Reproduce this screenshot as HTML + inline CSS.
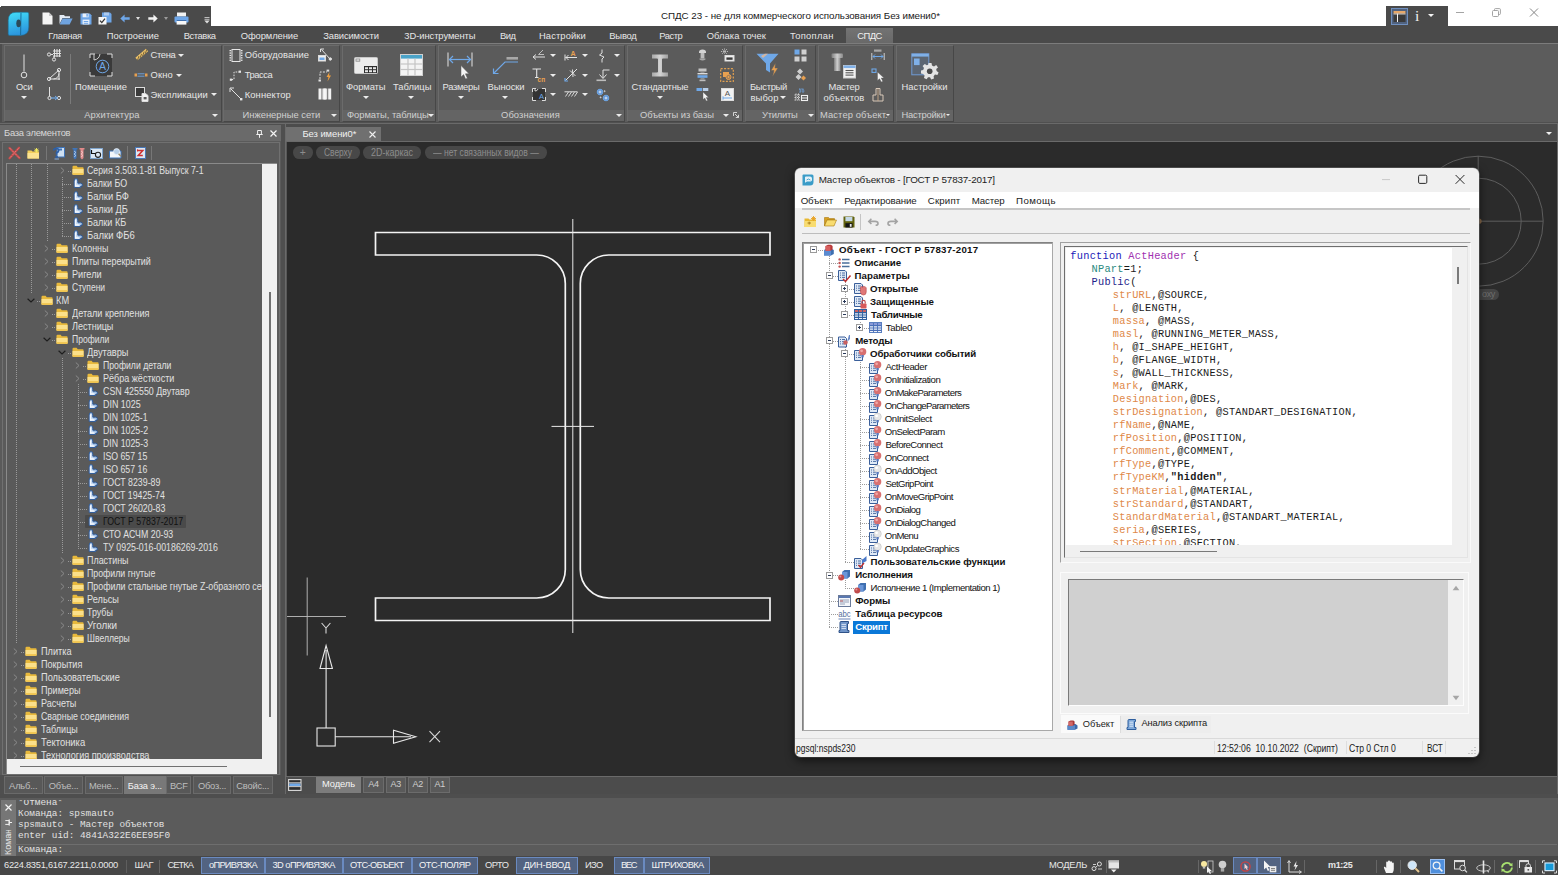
<!DOCTYPE html>
<html><head><meta charset="utf-8">
<style>
*{box-sizing:border-box;margin:0;padding:0}
html,body{width:1560px;height:877px;overflow:hidden;background:#fff}
body{font-family:"Liberation Sans",sans-serif;font-size:11px;color:#dcdcdc;position:relative}
.a{position:absolute}
.t{position:absolute;white-space:pre;line-height:1}
svg{position:absolute;overflow:visible}

</style></head><body>
<!-- top -->
<div class="a" style="left:1px;top:6px;width:210px;height:21px;background:#4a4a4a;"></div>
<div class="a" style="left:0px;top:26px;width:1558px;height:18px;background:#4a4a4a;"></div>
<div class="a" style="left:0px;top:7px;width:1px;height:20px;background:#4a4a4a;"></div>
<svg style="left:7.5px;top:12px" width="22" height="24" viewBox="0 0 22 24"><defs><linearGradient id="lg1" x1="0" y1="0" x2="0.25" y2="1"><stop offset="0" stop-color="#42def8"/><stop offset="1" stop-color="#2c96de"/></linearGradient></defs>
<path d="M8 0.3 H19.3 Q20.8 0.3 20.8 1.8 V15 Q20.8 23.4 12.5 23.4 H1.7 Q0.2 23.4 0.2 21.9 V8.5 Q0.2 0.3 8 0.3Z" fill="url(#lg1)" stroke="#1d6f96" stroke-width="0.6"/>
<path d="M13 0.8 L12.6 23" stroke="#1a6e9e" stroke-width="1"/>
<ellipse cx="10.6" cy="11.3" rx="2.3" ry="3.9" fill="#2c4a58"/></svg>
<svg style="left:42px;top:12px" width="11" height="13" viewBox="0 0 11 13"><path d="M0.5 0.5 H7 L10.5 4 V12.5 H0.5Z" fill="#f4f4f4"/><path d="M7 0.5 V4 H10.5Z" fill="#c9c9c9"/></svg>
<svg style="left:59px;top:14px" width="14" height="11" viewBox="0 0 14 11"><path d="M0.5 1 H5 L6 2.2 H11 V4 H3.5 L0.5 10Z" fill="#e4ecf6"/><path d="M3.6 4.4 H13.6 L10.6 10.4 H0.6Z" fill="#6fa3df"/></svg>
<svg style="left:80px;top:13px" width="12" height="12" viewBox="0 0 12 12"><path d="M0.5 0.5 H9.8 L11.5 2.2 V11.5 H0.5Z" fill="#6ea6e8"/><rect x="2.6" y="0.5" width="6" height="3.8" fill="#e8f0fb"/><rect x="6.4" y="1" width="1.4" height="2.6" fill="#6ea6e8"/><rect x="2.6" y="6.6" width="6.8" height="4.9" fill="#e8f0fb"/><rect x="3.8" y="8" width="4.4" height="1" fill="#6ea6e8"/><rect x="3.8" y="9.8" width="4.4" height="1" fill="#6ea6e8"/></svg>
<svg style="left:98px;top:12px" width="14" height="13" viewBox="0 0 14 13"><path d="M4 0.5 H12 L13.5 2 V10.5 H4Z" fill="#6ea6e8"/><rect x="6" y="0.5" width="5" height="3" fill="#aecbf0"/><rect x="0.5" y="5" width="8" height="7.5" fill="#f6f6f6"/><path d="M2 8.6 L3.8 10.6 L7 6.6" stroke="#333" stroke-width="1.3" fill="none"/></svg>
<svg style="left:120px;top:14px" width="10" height="9" viewBox="0 0 10 9"><path d="M0.3 4.5 L4.6 0.5 V3.2 H9.7 V5.8 H4.6 V8.5Z" fill="#6ea6e8"/></svg>
<div class="a" style="left:135.70000000000002px;top:17.3px;width:0;height:0;border:2.6px solid transparent;border-top:3.1px solid #e0e0e0;border-bottom:0"></div>
<svg style="left:148px;top:14px" width="10" height="9" viewBox="0 0 10 9"><path d="M9.7 4.5 L5.4 0.5 V3.2 H0.3 V5.8 H5.4 V8.5Z" fill="#f2f2f2"/></svg>
<div class="a" style="left:164.1px;top:17.3px;width:0;height:0;border:2.6px solid transparent;border-top:3.1px solid #9a9a9a;border-bottom:0"></div>
<svg style="left:174px;top:12px" width="15" height="13" viewBox="0 0 15 13"><rect x="3" y="0.5" width="9" height="4" fill="#f2f2f2"/><rect x="0.5" y="4.5" width="14" height="6" rx="1" fill="#6ea6e8"/><rect x="2.6" y="8.6" width="9.8" height="4" fill="#f7f7f7"/><rect x="2.6" y="8" width="9.8" height="1" fill="#3e6fae"/></svg>
<svg style="left:204px;top:17px" width="6" height="7" viewBox="0 0 6 7"><rect x="0.5" y="0" width="5" height="1" fill="#bdbdbd"/><rect x="0.5" y="1.8" width="5" height="1" fill="#bdbdbd"/><path d="M0.3 3.6 H5.7 L3 6.6Z" fill="#dedede"/></svg>
<div class="t" style="left:661.00px;top:10.70px;font-size:9.8px;color:#1a1a1a;letter-spacing:-0.050px;">СПДС 23 - не для коммерческого использования Без имени0*</div>
<div class="a" style="left:1386px;top:6px;width:62px;height:21px;background:#4a4a4a;"></div>
<svg style="left:1391px;top:8px" width="17" height="17" viewBox="0 0 17 17"><rect x="0.5" y="0.5" width="16" height="16" fill="#50627f" stroke="#6f8fbe"/><rect x="2.5" y="3" width="12" height="11" fill="#3a3a3a"/><rect x="2.5" y="3" width="12" height="2.6" fill="#e6a86a"/><rect x="6" y="5.6" width="1" height="8.4" fill="#f0f0f0"/><rect x="2.5" y="5.6" width="12" height="0.8" fill="#f0f0f0"/></svg>
<div class="t" style="left:1415.00px;top:8.08px;font-size:15.5px;color:#f0f0f0;font-family:'Liberation Serif',serif;">i</div>
<div class="a" style="left:1428px;top:14.1px;width:0;height:0;border:3px solid transparent;border-top:3.5px solid #f4f4f4;border-bottom:0"></div>
<svg style="left:1455px;top:8px" width="90" height="12" viewBox="0 0 90 12"><path d="M1 4.5 H9" stroke="#9a9a9a" stroke-width="0.9"/><rect x="37.5" y="2.5" width="6" height="6" rx="1" fill="none" stroke="#9a9a9a" stroke-width="0.9"/><path d="M39.5 2.5 V1.5 Q39.5 0.6 40.4 0.6 H44.4 Q45.4 0.6 45.4 1.5 V5.6 Q45.4 6.5 44.5 6.5 H43.6" fill="none" stroke="#9a9a9a" stroke-width="0.9"/><path d="M75 0.5 L83 8.5 M83 0.5 L75 8.5" stroke="#777" stroke-width="0.9"/></svg>
<div class="a" style="left:846px;top:28px;width:47px;height:16px;background:linear-gradient(#737373,#686868)"></div>
<div class="t" style="left:48.30px;top:31.24px;font-size:9.4px;color:#e6e6e6;letter-spacing:-0.297px;">Главная</div>
<div class="t" style="left:106.70px;top:31.24px;font-size:9.4px;color:#e6e6e6;">Построение</div>
<div class="t" style="left:183.70px;top:31.24px;font-size:9.4px;color:#e6e6e6;letter-spacing:-0.420px;">Вставка</div>
<div class="t" style="left:240.70px;top:31.24px;font-size:9.4px;color:#e6e6e6;letter-spacing:-0.075px;">Оформление</div>
<div class="t" style="left:323.30px;top:31.24px;font-size:9.4px;color:#e6e6e6;letter-spacing:-0.122px;">Зависимости</div>
<div class="t" style="left:404.30px;top:31.24px;font-size:9.4px;color:#e6e6e6;letter-spacing:-0.061px;">3D-инструменты</div>
<div class="t" style="left:500.00px;top:31.24px;font-size:9.4px;color:#e6e6e6;letter-spacing:-0.435px;">Вид</div>
<div class="t" style="left:539.00px;top:31.24px;font-size:9.4px;color:#e6e6e6;letter-spacing:0.101px;">Настройки</div>
<div class="t" style="left:609.30px;top:31.24px;font-size:9.4px;color:#e6e6e6;letter-spacing:-0.204px;">Вывод</div>
<div class="t" style="left:659.30px;top:31.24px;font-size:9.4px;color:#e6e6e6;letter-spacing:-0.484px;">Растр</div>
<div class="t" style="left:706.70px;top:31.24px;font-size:9.4px;color:#e6e6e6;letter-spacing:0.058px;">Облака точек</div>
<div class="t" style="left:790.00px;top:31.24px;font-size:9.4px;color:#e6e6e6;letter-spacing:0.269px;">Топоплан</div>
<div class="t" style="left:857.30px;top:31.24px;font-size:9.4px;color:#f2f2f2;letter-spacing:-0.575px;">СПДС</div>
<div class="a" style="left:0px;top:43px;width:1558px;height:80px;background:#5c5c5c;"></div>
<div class="a" style="left:0px;top:42.8px;width:1558px;height:1.4px;background:#7c7c7c;"></div>
<div class="a" style="left:0px;top:122px;width:1558px;height:1px;background:#505050;"></div>
<div class="a" style="left:0px;top:123px;width:1558px;height:1px;background:#6a6a6a;"></div>
<div class="a" style="left:0px;top:44px;width:2px;height:78px;background:#4e4e4e;"></div>
<div class="a" style="left:4px;top:44.5px;width:217.5px;height:77px;background:#5b5b5b;border:1px solid #6b6b6b;border-right-color:#474747;border-bottom-color:#474747"></div>
<div class="a" style="left:5px;top:109.5px;width:215.5px;height:11px;background:#646464;"></div>
<div class="a" style="left:223px;top:44.5px;width:116.5px;height:77px;background:#5b5b5b;border:1px solid #6b6b6b;border-right-color:#474747;border-bottom-color:#474747"></div>
<div class="a" style="left:224px;top:109.5px;width:114.5px;height:11px;background:#646464;"></div>
<div class="a" style="left:342px;top:44.5px;width:93.5px;height:77px;background:#5b5b5b;border:1px solid #6b6b6b;border-right-color:#474747;border-bottom-color:#474747"></div>
<div class="a" style="left:343px;top:109.5px;width:91.5px;height:11px;background:#646464;"></div>
<div class="a" style="left:437.5px;top:44.5px;width:187.0px;height:77px;background:#5b5b5b;border:1px solid #6b6b6b;border-right-color:#474747;border-bottom-color:#474747"></div>
<div class="a" style="left:438.5px;top:109.5px;width:185.0px;height:11px;background:#646464;"></div>
<div class="a" style="left:627px;top:44.5px;width:115.5px;height:77px;background:#5b5b5b;border:1px solid #6b6b6b;border-right-color:#474747;border-bottom-color:#474747"></div>
<div class="a" style="left:628px;top:109.5px;width:113.5px;height:11px;background:#646464;"></div>
<div class="a" style="left:745px;top:44.5px;width:71px;height:77px;background:#5b5b5b;border:1px solid #6b6b6b;border-right-color:#474747;border-bottom-color:#474747"></div>
<div class="a" style="left:746px;top:109.5px;width:69px;height:11px;background:#646464;"></div>
<div class="a" style="left:818px;top:44.5px;width:75.5px;height:77px;background:#5b5b5b;border:1px solid #6b6b6b;border-right-color:#474747;border-bottom-color:#474747"></div>
<div class="a" style="left:819px;top:109.5px;width:73.5px;height:11px;background:#646464;"></div>
<div class="a" style="left:896px;top:44.5px;width:57.5px;height:77px;background:#5b5b5b;border:1px solid #6b6b6b;border-right-color:#474747;border-bottom-color:#474747"></div>
<div class="a" style="left:897px;top:109.5px;width:55.5px;height:11px;background:#646464;"></div>
<!-- ribbon -->
<svg style="left:17px;top:53px" width="12" height="28" viewBox="0 0 12 28"><path d="M7 1.5 L7 18.5" stroke="#e2e2e2" stroke-width="1" fill="none"/><circle cx="7" cy="22" r="2.8" stroke="#e2e2e2" stroke-width="1" fill="none"/></svg>
<div class="t" style="left:16.00px;top:82.04px;font-size:9.4px;color:#e6e6e6;letter-spacing:-0.254px;">Оси</div>
<div class="a" style="left:21px;top:95.5px;width:0;height:0;border:3px solid transparent;border-top:3.5px solid #ececec;border-bottom:0"></div>
<svg style="left:47px;top:48px" width="14" height="14" viewBox="0 0 14 14"><path d="M7.5 1 L7.5 9" stroke="#e2e2e2" stroke-width="1" fill="none"/><path d="M10 1 L10 9" stroke="#e2e2e2" stroke-width="1" fill="none"/><path d="M12.5 1 L12.5 9" stroke="#e2e2e2" stroke-width="1" fill="none"/><path d="M6 3 L14 3" stroke="#e2e2e2" stroke-width="1" fill="none"/><path d="M6 5.5 L14 5.5" stroke="#e2e2e2" stroke-width="1" fill="none"/><path d="M6 8 L14 8" stroke="#e2e2e2" stroke-width="1" fill="none"/><circle cx="2" cy="6.5" r="1.6" stroke="#e2e2e2" stroke-width="1" fill="none"/><circle cx="7" cy="11.5" r="1.6" stroke="#e2e2e2" stroke-width="1" fill="none"/><path d="M3.6 6.5 L6 6.5" stroke="#e2e2e2" stroke-width="1" fill="none"/><path d="M7 8 L7 10" stroke="#e2e2e2" stroke-width="1" fill="none"/></svg>
<svg style="left:47px;top:68px" width="14" height="13" viewBox="0 0 14 13"><path d="M2 11 L13 11" stroke="#e2e2e2" stroke-width="1" fill="none"/><path d="M3 10 L12 2" stroke="#e2e2e2" stroke-width="1" fill="none"/><path d="M6.5 11 A6 6 0 0 0 12 5.5" stroke="#e2e2e2" fill="none"/><path d="M12 3.5 L12 12" stroke="#e2e2e2" stroke-width="1" fill="none"/><circle cx="2" cy="11" r="1.6" stroke="#e2e2e2" stroke-width="1" fill="none"/><circle cx="12" cy="2" r="1.6" stroke="#e2e2e2" stroke-width="1" fill="none"/></svg>
<svg style="left:47px;top:86px" width="14" height="14" viewBox="0 0 14 14"><path d="M2.5 1 L2.5 10.5" stroke="#e2e2e2" stroke-width="1" fill="none"/><circle cx="2.5" cy="12" r="1.6" stroke="#e2e2e2" stroke-width="1" fill="none"/><circle cx="12" cy="12" r="1.6" stroke="#e2e2e2" stroke-width="1" fill="none"/><path d="M4 12 L10.4 12" stroke="#6fa8e8" stroke-width="1.2" fill="none"/><path d="M8 10 L10.4 12 L8 14" stroke="#6fa8e8" fill="none"/></svg>
<div class="a" style="left:69.5px;top:54px;width:1px;height:50px;background:#7a7a7a;"></div>
<svg style="left:89px;top:53px" width="24" height="24" viewBox="0 0 24 24"><rect x="1" y="1" width="22" height="22" fill="#3a3a3a"/><path d="M1 5 V1 H6 M18 1 H23 V5 M23 19 V23 H18 M6 23 H1 V19" stroke="#dcdcdc" fill="none"/><path d="M5 1 V7 A7 7 0 0 0 11 1" stroke="#cfcfcf" fill="none"/><circle cx="13.5" cy="13.5" r="6.3" stroke="#6fa8e8" stroke-width="1" fill="none"/><text x="13.5" y="17.3" font-size="10.5" fill="#6fa8e8" text-anchor="middle" font-family="Liberation Sans">A</text></svg>
<div class="t" style="left:75.00px;top:82.04px;font-size:9.4px;color:#e6e6e6;letter-spacing:-0.022px;">Помещение</div>
<svg style="left:134.5px;top:48px" width="14" height="13" viewBox="0 0 14 13"><path d="M1.5 11 L12 2" stroke="#f0c468" stroke-width="3.4"/><path d="M2.4 12.4 L4 8 M5 10.2 L6.6 5.8 M7.6 8 L9.2 3.6 M10.2 5.8 L11.8 1.4" stroke="#6a5a3a" stroke-width="0.9"/></svg>
<div class="t" style="left:150.50px;top:50.44px;font-size:9.4px;color:#e6e6e6;letter-spacing:-0.327px;">Стена</div>
<div class="a" style="left:178px;top:54.0px;width:0;height:0;border:3px solid transparent;border-top:3.5px solid #ececec;border-bottom:0"></div>
<svg style="left:134px;top:72px" width="14" height="6" viewBox="0 0 14 6"><rect x="0.5" y="1.5" width="2.5" height="3" fill="#e8a050"/><rect x="11" y="1.5" width="2.5" height="3" fill="#e8a050"/><path d="M3.5 1.8 L10.5 1.8" stroke="#6fa8e8" stroke-width="0.9" fill="none"/><path d="M3.5 4.2 L10.5 4.2" stroke="#6fa8e8" stroke-width="0.9" fill="none"/></svg>
<div class="t" style="left:150.50px;top:70.04px;font-size:9.4px;color:#e6e6e6;letter-spacing:0.164px;">Окно</div>
<div class="a" style="left:176px;top:73.5px;width:0;height:0;border:3px solid transparent;border-top:3.5px solid #ececec;border-bottom:0"></div>
<svg style="left:135px;top:87px" width="15" height="16" viewBox="0 0 15 16"><rect x="0.5" y="0.5" width="9" height="9" fill="#3a3a3a" stroke="#dcdcdc" stroke-width="1"/><path d="M7 6.5 H10.5 L13 8.5 V14.5 H7Z" fill="#f2f2f2" stroke="#dcdcdc"/><rect x="8.6" y="10" width="3" height="2.4" fill="#5c5c5c"/></svg>
<div class="t" style="left:150.50px;top:89.64px;font-size:9.4px;color:#e6e6e6;letter-spacing:0.052px;">Экспликации</div>
<div class="a" style="left:211px;top:93.0px;width:0;height:0;border:3px solid transparent;border-top:3.5px solid #ececec;border-bottom:0"></div>
<div class="t" style="left:84.25px;top:109.84px;font-size:9.4px;color:#d0d0d0;letter-spacing:0.095px;">Архитектура</div>
<div class="a" style="left:212px;top:114.0px;width:0;height:0;border:3px solid transparent;border-top:3.5px solid #ececec;border-bottom:0"></div>
<svg style="left:229px;top:49px" width="14" height="13" viewBox="0 0 14 13"><rect x="3" y="0.5" width="8" height="12" fill="none" stroke="#e6e6e6" stroke-width="1"/><rect x="0.5" y="1" width="1.6" height="1.3" fill="#e6e6e6"/><rect x="11.9" y="1" width="1.6" height="1.3" fill="#e6e6e6"/><rect x="0.5" y="3.4" width="1.6" height="1.3" fill="#e6e6e6"/><rect x="11.9" y="3.4" width="1.6" height="1.3" fill="#e6e6e6"/><rect x="0.5" y="5.8" width="1.6" height="1.3" fill="#e6e6e6"/><rect x="11.9" y="5.8" width="1.6" height="1.3" fill="#e6e6e6"/><rect x="0.5" y="8.2" width="1.6" height="1.3" fill="#e6e6e6"/><rect x="11.9" y="8.2" width="1.6" height="1.3" fill="#e6e6e6"/><rect x="0.5" y="10.6" width="1.6" height="1.3" fill="#e6e6e6"/><rect x="11.9" y="10.6" width="1.6" height="1.3" fill="#e6e6e6"/></svg>
<div class="t" style="left:244.70px;top:50.44px;font-size:9.4px;color:#e6e6e6;letter-spacing:0.039px;">Оборудование</div>
<svg style="left:229px;top:69px" width="13" height="13" viewBox="0 0 13 13"><path d="M2.5 10.5 H5 V3 H10" stroke="#e0e0e0" stroke-dasharray="1.6 1.3" fill="none"/><rect x="0.8" y="9.6" width="2.4" height="2.2" fill="#e6e6e6"/><rect x="9.6" y="1.6" width="2.4" height="2.2" fill="#e6e6e6"/></svg>
<div class="t" style="left:244.70px;top:69.94px;font-size:9.4px;color:#e6e6e6;letter-spacing:-0.416px;">Трасса</div>
<svg style="left:229px;top:87px" width="14" height="14" viewBox="0 0 14 14"><path d="M1.5 1.5 L12 12" stroke="#e2e2e2" stroke-width="1" fill="none"/><path d="M1 5 V1 H5" stroke="#e2e2e2" fill="none"/><rect x="11" y="11" width="2.4" height="2.4" fill="#e6e6e6"/></svg>
<div class="t" style="left:244.70px;top:89.84px;font-size:9.4px;color:#e6e6e6;letter-spacing:0.124px;">Коннектор</div>
<svg style="left:318px;top:48px" width="14" height="14" viewBox="0 0 14 14"><path d="M3.5 1.5 L12 11" stroke="#e2e2e2" stroke-width="1" fill="none"/><path d="M2.5 4 V1 H6" stroke="#e2e2e2" fill="none"/><circle cx="12.3" cy="11" r="1.2" stroke="#e2e2e2" stroke-width="1" fill="#e2e2e2"/><rect x="0.5" y="7.5" width="7" height="5.5" fill="#f0f0f0" stroke="#dcdcdc" stroke-width="1"/><rect x="1.5" y="9.5" width="5" height="2.5" fill="#6fa8e8"/></svg>
<svg style="left:318px;top:69px" width="14" height="13" viewBox="0 0 14 13"><path d="M2 10 V3 H9" stroke="#e0e0e0" stroke-dasharray="2 1.3" fill="none"/><rect x="0.5" y="10.5" width="2.4" height="2" fill="#e6e6e6"/><rect x="8.6" y="0.6" width="2.6" height="2" fill="#dcdcdc"/><path d="M11.5 3 L8.5 8 H10.5 L9.5 12.5 L13 6.5 H11Z" fill="#f0a040"/></svg>
<svg style="left:318px;top:88px" width="14" height="12" viewBox="0 0 14 12"><rect x="0.5" y="0.5" width="3" height="11" fill="#f2f2f2"/><rect x="4.3" y="0.5" width="5" height="11" fill="#e0e0e0"/><rect x="10.2" y="0.5" width="3" height="11" fill="#f2f2f2"/><rect x="5.5" y="0.5" width="2.4" height="11" fill="#f7f7f7"/></svg>
<div class="t" style="left:242.50px;top:109.84px;font-size:9.4px;color:#d0d0d0;">Инженерные сети</div>
<div class="a" style="left:331px;top:114.0px;width:0;height:0;border:3px solid transparent;border-top:3.5px solid #ececec;border-bottom:0"></div>
<svg style="left:354px;top:57px" width="24" height="17" viewBox="0 0 24 17"><rect x="0.5" y="0.5" width="23" height="16" fill="#ececec" stroke="#c8c8c8" stroke-width="1" rx="1"/><rect x="1.6" y="1.6" width="4.6" height="3" fill="#8a8a8a"/><rect x="2.4" y="2.4" width="3" height="1.3" fill="#f0f0f0"/><rect x="10" y="9" width="13" height="7" fill="#2e2e2e"/><rect x="11" y="10.2" width="3" height="2" fill="#e8e8e8"/><rect x="11" y="13.2" width="3" height="2" fill="#e8e8e8"/><rect x="15" y="10.2" width="3" height="2" fill="#e8e8e8"/><rect x="15" y="13.2" width="3" height="2" fill="#e8e8e8"/><rect x="19" y="10.2" width="3" height="2" fill="#e8e8e8"/><rect x="19" y="13.2" width="3" height="2" fill="#e8e8e8"/></svg>
<div class="t" style="left:346.00px;top:82.04px;font-size:9.4px;color:#e6e6e6;letter-spacing:-0.093px;">Форматы</div>
<div class="a" style="left:363px;top:95.5px;width:0;height:0;border:3px solid transparent;border-top:3.5px solid #ececec;border-bottom:0"></div>
<svg style="left:400px;top:54px" width="23" height="22" viewBox="0 0 23 22"><rect x="0.5" y="0.5" width="22" height="21" fill="#f4f4f4" stroke="#d0d0d0" stroke-width="1"/><rect x="1" y="1" width="21" height="3.6" fill="#4aa3c8"/><path d="M8 4.6 L8 21.5" stroke="#c4c4c4" stroke-width="1.2" fill="none"/><path d="M15 4.6 L15 21.5" stroke="#c4c4c4" stroke-width="1.2" fill="none"/><path d="M0.5 10.0 L22.5 10.0" stroke="#c4c4c4" stroke-width="1.2" fill="none"/><path d="M0.5 15.5 L22.5 15.5" stroke="#c4c4c4" stroke-width="1.2" fill="none"/></svg>
<div class="t" style="left:393.00px;top:82.04px;font-size:9.4px;color:#e6e6e6;letter-spacing:0.016px;">Таблицы</div>
<div class="a" style="left:408px;top:95.5px;width:0;height:0;border:3px solid transparent;border-top:3.5px solid #ececec;border-bottom:0"></div>
<div class="t" style="left:347.00px;top:109.84px;font-size:9.4px;color:#d0d0d0;letter-spacing:-0.040px;">Форматы, таблицы</div>
<div class="a" style="left:427.5px;top:114.0px;width:0;height:0;border:3px solid transparent;border-top:3.5px solid #ececec;border-bottom:0"></div>
<svg style="left:447px;top:52px" width="27" height="28" viewBox="0 0 27 28"><path d="M1 0.5 L1 14.5" stroke="#cfcfcf" stroke-width="1.2" fill="none"/><path d="M25 0.5 L25 14.5" stroke="#cfcfcf" stroke-width="1.2" fill="none"/><path d="M2.5 7.5 L23.5 7.5" stroke="#6fa8e8" stroke-width="1.2" fill="none"/><path d="M6 4 L2.5 7.5 L6 11 M20 4 L23.5 7.5 L20 11" stroke="#6fa8e8" stroke-width="1.2" fill="none"/><path d="M14 13.5 V25 L16.6 22.6 L18.6 27 L20.4 26.2 L18.4 21.8 H22Z" fill="#f4f4f4" stroke="#5c5c5c" stroke-width="0.5"/></svg>
<div class="t" style="left:442.50px;top:82.04px;font-size:9.4px;color:#e6e6e6;letter-spacing:-0.295px;">Размеры</div>
<div class="a" style="left:458px;top:95.5px;width:0;height:0;border:3px solid transparent;border-top:3.5px solid #ececec;border-bottom:0"></div>
<svg style="left:492px;top:56px" width="27" height="19" viewBox="0 0 27 19"><rect x="14.5" y="1" width="11.5" height="2.6" fill="#a8a8a8"/><path d="M26 6 H13 L2 17" stroke="#6fa8e8" stroke-width="1.2" fill="none"/><path d="M1.5 12.5 V17.5 H6.5" stroke="#6fa8e8" stroke-width="1.2" fill="none"/></svg>
<div class="t" style="left:487.60px;top:82.04px;font-size:9.4px;color:#e6e6e6;letter-spacing:-0.073px;">Выноски</div>
<div class="a" style="left:502px;top:95.5px;width:0;height:0;border:3px solid transparent;border-top:3.5px solid #ececec;border-bottom:0"></div>
<svg style="left:532px;top:49px" width="14" height="12" viewBox="0 0 14 12"><path d="M1 8 L13 8" stroke="#e2e2e2" stroke-width="1" fill="none"/><path d="M4 5.5 L1 8 L4 10.5" stroke="#e2e2e2" fill="none"/><path d="M6.5 5.5 L11 1 M6.5 5.5 H12" stroke="#bdbdbd" fill="none"/></svg>
<div class="a" style="left:550px;top:54.0px;width:0;height:0;border:3px solid transparent;border-top:3.5px solid #ececec;border-bottom:0"></div>
<svg style="left:564px;top:49px" width="14" height="12" viewBox="0 0 14 12"><path d="M1 5.5 L1 11.5" stroke="#e2e2e2" stroke-width="1" fill="none"/><path d="M1.5 8.5 L13 8.5" stroke="#e2e2e2" stroke-width="1" fill="none"/><path d="M4.5 6 L2 8.5 L4.5 11" stroke="#e2e2e2" fill="none"/><text x="9" y="6.5" font-size="7" font-weight="bold" fill="#e8a050" text-anchor="middle" font-family="Liberation Sans">A</text></svg>
<div class="a" style="left:582px;top:54.0px;width:0;height:0;border:3px solid transparent;border-top:3.5px solid #ececec;border-bottom:0"></div>
<svg style="left:597px;top:49px" width="10" height="14" viewBox="0 0 10 14"><path d="M5 0.5 V4 L2.5 6 L7 8 L5 10 V13.5" stroke="#e2e2e2" fill="none"/></svg>
<div class="a" style="left:613.5px;top:54.0px;width:0;height:0;border:3px solid transparent;border-top:3.5px solid #ececec;border-bottom:0"></div>
<svg style="left:532px;top:68px" width="14" height="14" viewBox="0 0 14 14"><path d="M0.5 1 H9 M4.7 1 V9.5 M3 9.5 H6.5" stroke="#e6e6e6" stroke-width="1.1" fill="none"/><text x="9.3" y="13.6" font-size="6.5" font-weight="bold" fill="#e8a050" text-anchor="middle" font-family="Liberation Sans">сп</text></svg>
<div class="a" style="left:550px;top:73.5px;width:0;height:0;border:3px solid transparent;border-top:3.5px solid #ececec;border-bottom:0"></div>
<svg style="left:564px;top:68px" width="14" height="14" viewBox="0 0 14 14"><path d="M1.5 12.5 L13 1" stroke="#e2e2e2" stroke-width="1" fill="none"/><path d="M6 2.5 L11.5 8 M8.5 1.5 L9 9" stroke="#e2e2e2" fill="none"/><path d="M1 10 V13 H4" stroke="#6fa8e8" stroke-width="1.2" fill="none"/></svg>
<div class="a" style="left:582px;top:73.5px;width:0;height:0;border:3px solid transparent;border-top:3.5px solid #ececec;border-bottom:0"></div>
<svg style="left:596px;top:69px" width="14" height="13" viewBox="0 0 14 13"><path d="M13.5 1 H7 V9" stroke="#e2e2e2" fill="none"/><path d="M3.5 5.5 L7 9.5 L10.5 5.5" stroke="#e2e2e2" fill="none"/><rect x="0.5" y="10.5" width="9.5" height="1.6" fill="#bdbdbd"/></svg>
<div class="a" style="left:613.5px;top:73.5px;width:0;height:0;border:3px solid transparent;border-top:3.5px solid #ececec;border-bottom:0"></div>
<svg style="left:532px;top:88px" width="14" height="13" viewBox="0 0 14 13"><rect x="1" y="1" width="12" height="11" fill="#333"/><path d="M0.5 4 V0.5 H4 M10 0.5 H13.5 V4 M13.5 9 V12.5 H10 M4 12.5 H0.5 V9" stroke="#dcdcdc" fill="none"/><path d="M3 0.5 V3 A3 3 0 0 0 6 1" stroke="#cfcfcf" fill="none"/><text x="9.5" y="10.5" font-size="7.5" fill="#6fa8e8" text-anchor="middle" font-family="Liberation Sans">A</text></svg>
<div class="a" style="left:550px;top:93.0px;width:0;height:0;border:3px solid transparent;border-top:3.5px solid #ececec;border-bottom:0"></div>
<svg style="left:564px;top:91px" width="14" height="6" viewBox="0 0 14 6"><path d="M0.5 0.8 L13.5 0.8" stroke="#e2e2e2" stroke-width="1" fill="none"/><path d="M1.5 5.5 L4.5 1" stroke="#e2e2e2" stroke-width="0.9" fill="none"/><path d="M4.5 5.5 L7.5 1" stroke="#e2e2e2" stroke-width="0.9" fill="none"/><path d="M7.5 5.5 L10.5 1" stroke="#e2e2e2" stroke-width="0.9" fill="none"/><path d="M10.5 5.5 L13.5 1" stroke="#e2e2e2" stroke-width="0.9" fill="none"/></svg>
<div class="a" style="left:582px;top:93.0px;width:0;height:0;border:3px solid transparent;border-top:3.5px solid #ececec;border-bottom:0"></div>
<svg style="left:596px;top:88px" width="14" height="14" viewBox="0 0 14 14"><circle cx="4" cy="4" r="2.8" stroke="#6fa8e8" stroke-width="1" fill="#5d8fd0"/><circle cx="10" cy="10" r="2.8" stroke="#6fa8e8" stroke-width="1" fill="#5d8fd0"/><path d="M2.5 4 H5.5 M4 2.5 V5.5 M8.5 10 H11.5 M10 8.5 V11.5" stroke="#e8f0fb" stroke-width="0.9"/><circle cx="8.6" cy="3.2" r="0.6" stroke="#cfcfcf" stroke-width="0.6" fill="#cfcfcf"/><circle cx="4.6" cy="9.4" r="0.6" stroke="#cfcfcf" stroke-width="0.6" fill="#cfcfcf"/></svg>
<div class="t" style="left:501.00px;top:109.84px;font-size:9.4px;color:#d0d0d0;letter-spacing:0.091px;">Обозначения</div>
<div class="a" style="left:615.5px;top:114.0px;width:0;height:0;border:3px solid transparent;border-top:3.5px solid #ececec;border-bottom:0"></div>
<svg style="left:651px;top:54px" width="18" height="23" viewBox="0 0 18 23"><defs><linearGradient id="gI" x1="0" x2="1"><stop offset="0" stop-color="#a8a8a8"/><stop offset="0.5" stop-color="#d4d4d4"/><stop offset="1" stop-color="#a0a0a0"/></linearGradient></defs><path d="M1 0.5 H17 V4.5 H12 Q11 4.5 11 5.5 V17.5 Q11 18.5 12 18.5 H17 V22.5 H1 V18.5 H6 Q7 18.5 7 17.5 V5.5 Q7 4.5 6 4.5 H1Z" fill="url(#gI)"/></svg>
<div class="t" style="left:631.50px;top:82.04px;font-size:9.4px;color:#e6e6e6;letter-spacing:-0.147px;">Стандартные</div>
<div class="a" style="left:656.5px;top:95.5px;width:0;height:0;border:3px solid transparent;border-top:3.5px solid #ececec;border-bottom:0"></div>
<svg style="left:698px;top:49px" width="9" height="12" viewBox="0 0 9 12"><path d="M1 3 Q1 0.5 4.5 0.5 Q8 0.5 8 3 V4 H1Z" fill="#d4d4d4"/><rect x="2.6" y="4" width="3.8" height="5.5" fill="#bdbdbd"/><path d="M1.5 9.5 H7.5 V10.5 Q4.5 12.5 1.5 10.5Z" fill="#a8a8a8"/></svg>
<svg style="left:697px;top:68px" width="11" height="14" viewBox="0 0 11 14"><rect x="1.5" y="0.5" width="8" height="3" fill="#c4c4c4"/><rect x="3.5" y="3.5" width="4" height="1.2" fill="#9a9a9a"/><rect x="0.5" y="5" width="10" height="1.4" fill="#dcdcdc"/><rect x="0.5" y="7.2" width="10" height="2.6" fill="#6fa8e8"/><rect x="3.5" y="10.2" width="4" height="1.2" fill="#9a9a9a"/><rect x="2.5" y="11.6" width="6" height="1.6" fill="#bdbdbd"/></svg>
<svg style="left:696px;top:87px" width="14" height="14" viewBox="0 0 14 14"><rect x="0.5" y="1" width="5.5" height="3" fill="#6fa8e8"/><rect x="6.8" y="1" width="5.5" height="3" fill="#b8cde6"/><path d="M7 5 V12.6 L8.8 11 L10.2 14 L11.6 13.4 L10.2 10.4 H12.6Z" fill="#f4f4f4" stroke="#5c5c5c" stroke-width="0.4"/></svg>
<svg style="left:720px;top:48px" width="15" height="14" viewBox="0 0 15 14"><path d="M2 1 L7 6 M7 1 L2 6 M1 3.5 H8 M4.5 0.5 V6.5" stroke="#cfcfcf" stroke-width="0.8" stroke-dasharray="1.2 0.8"/><rect x="5" y="7.5" width="9" height="5.5" fill="#f0f0f0" stroke="#dcdcdc" stroke-width="1"/><rect x="6.4" y="9.4" width="6.2" height="2.4" fill="#3a3a3a"/></svg>
<svg style="left:720px;top:68px" width="14" height="14" viewBox="0 0 14 14"><rect x="0.7" y="0.7" width="12.6" height="12.6" fill="none" stroke="#e0a050" stroke-width="1.2" stroke-dasharray="2 1.4"/><rect x="3" y="4" width="6" height="5" fill="#e8a050"/><circle cx="8.5" cy="9" r="2.5" stroke="#e8a050" stroke-width="1" fill="#e8a050"/><circle cx="8.5" cy="9" r="1.6" stroke="#5c5c5c" stroke-width="0.6" fill="#e8a050"/></svg>
<svg style="left:721px;top:88px" width="13" height="13" viewBox="0 0 13 13"><rect x="0.5" y="0.5" width="12" height="12" fill="#f2f2f2" stroke="#dcdcdc" stroke-width="1"/><text x="6.5" y="7.8" font-size="8" fill="#555" text-anchor="middle" font-family="Liberation Sans">A</text><path d="M2 10 L11 10" stroke="#6fa8e8" stroke-width="1" fill="none"/><path d="M2 8.3 L2 11.7" stroke="#6fa8e8" stroke-width="1" fill="none"/></svg>
<div class="t" style="left:640.00px;top:109.84px;font-size:9.4px;color:#d0d0d0;letter-spacing:-0.060px;">Объекты из базы</div>
<div class="a" style="left:722.5px;top:114.0px;width:0;height:0;border:3px solid transparent;border-top:3.5px solid #ececec;border-bottom:0"></div>
<svg style="left:733px;top:112px" width="6" height="6" viewBox="0 0 6 6"><path d="M0.5 4 V0.5 H4 M2 2 L5.5 5.5 M5.5 2.8 V5.5 H2.8" stroke="#e2e2e2" stroke-width="0.9" fill="none"/></svg>
<svg style="left:756px;top:53px" width="24" height="24" viewBox="0 0 24 24"><path d="M0.5 0.8 H22.5 L14 10.5 V19.5 L10 17 V10.5Z" fill="#6fa8e8"/><path d="M5 3 L9 0.8 H12 L7 5Z" fill="#e8b890" opacity="0.8"/><path d="M19.5 10 L15 17.5 H18 L16.5 23.5 L22 15 H19Z" fill="#e8a050" stroke="#5c5c5c" stroke-width="0.5"/></svg>
<div class="t" style="left:750.00px;top:82.04px;font-size:9.4px;color:#e6e6e6;letter-spacing:-0.309px;">Быстрый</div>
<div class="t" style="left:750.50px;top:93.04px;font-size:9.4px;color:#e6e6e6;letter-spacing:0.082px;">выбор</div>
<div class="a" style="left:780px;top:96.0px;width:0;height:0;border:3px solid transparent;border-top:3.5px solid #ececec;border-bottom:0"></div>
<svg style="left:794px;top:49px" width="14" height="14" viewBox="0 0 14 14"><rect x="0.5" y="0.5" width="5" height="5" fill="#6fa8e8"/><rect x="7.5" y="0.5" width="5" height="5" fill="#d0d0d0"/><rect x="0.5" y="7.5" width="5" height="5" fill="#d0d0d0"/><rect x="7.5" y="7.5" width="5" height="5" fill="#d0d0d0"/></svg>
<svg style="left:795px;top:68px" width="12" height="14" viewBox="0 0 12 14"><path d="M5 0.5 L8 3.5 L5 6.5 L2 3.5Z M3.5 6 L6.5 9 L3.5 12 L0.5 9Z" fill="#cfcfcf"/><path d="M8.5 7.5 L11 10 L8.5 12.5 L6 10Z" fill="#e8a050"/></svg>
<svg style="left:794px;top:88px" width="14" height="13" viewBox="0 0 14 13"><path d="M5 1 H10 M6 3 H11 M6 1 V5 M9 1 V5" stroke="#6fa8e8" stroke-width="0.9" stroke-dasharray="1.5 0.8"/><path d="M0.5 7 H6 M0.5 9.5 H6 M0.5 12 H6 M2 5.5 V12.5 M4.5 5.5 V12.5" stroke="#e0e0e0" stroke-width="0.9" stroke-dasharray="1.5 0.8"/><rect x="7.5" y="7.5" width="6" height="5" fill="none" stroke="#f0f0f0" stroke-width="1.1"/><path d="M7.5 10 L13.5 10" stroke="#f0f0f0" stroke-width="1" fill="none"/></svg>
<div class="t" style="left:762.00px;top:109.84px;font-size:9.4px;color:#d0d0d0;letter-spacing:-0.261px;">Утилиты</div>
<div class="a" style="left:807.5px;top:114.0px;width:0;height:0;border:3px solid transparent;border-top:3.5px solid #ececec;border-bottom:0"></div>
<svg style="left:831px;top:53px" width="25" height="26" viewBox="0 0 25 26"><defs><linearGradient id="gB" x1="0" x2="1"><stop offset="0" stop-color="#7e7e7e"/><stop offset="0.5" stop-color="#cfcfcf"/><stop offset="1" stop-color="#8a8a8a"/></linearGradient></defs><rect x="0.5" y="0.5" width="11.5" height="4.5" rx="1" fill="url(#gB)"/><rect x="3" y="5" width="6.5" height="13" fill="url(#gB)"/><rect x="12.5" y="12.5" width="12" height="12.5" fill="#f2f2f2" stroke="#cfcfcf" stroke-width="1"/><rect x="12.5" y="12.5" width="12" height="2.6" fill="#7fb0e8"/><path d="M14.5 17.5 L22.5 17.5" stroke="#555" stroke-width="1.1" fill="none"/><path d="M14.5 19.8 L22.5 19.8" stroke="#555" stroke-width="1.1" fill="none"/><path d="M14.5 22.1 L22.5 22.1" stroke="#555" stroke-width="1.1" fill="none"/></svg>
<div class="t" style="left:828.50px;top:82.04px;font-size:9.4px;color:#e6e6e6;letter-spacing:-0.253px;">Мастер</div>
<div class="t" style="left:823.50px;top:93.04px;font-size:9.4px;color:#e6e6e6;letter-spacing:0.120px;">объектов</div>
<svg style="left:871px;top:49px" width="14" height="12" viewBox="0 0 14 12"><rect x="3" y="0.5" width="7.5" height="2.2" fill="#a8a8a8"/><path d="M0.8 4 L0.8 11" stroke="#cfcfcf" stroke-width="1" fill="none"/><path d="M13.2 4 L13.2 11" stroke="#cfcfcf" stroke-width="1" fill="none"/><path d="M2 7.5 L12 7.5" stroke="#6fa8e8" stroke-width="1" fill="none"/><path d="M4 5.5 L2 7.5 L4 9.5 M10 5.5 L12 7.5 L10 9.5" stroke="#6fa8e8" fill="none"/></svg>
<svg style="left:871px;top:68px" width="14" height="14" viewBox="0 0 14 14"><rect x="1" y="1" width="4" height="3.4" fill="none" stroke="#6fa8e8" stroke-width="1.1"/><path d="M6.5 4 V12.5 L8.6 10.8 L10.2 14 L11.8 13.2 L10.2 10 H13Z" fill="#f4f4f4" stroke="#5c5c5c" stroke-width="0.4"/></svg>
<svg style="left:872px;top:88px" width="12" height="14" viewBox="0 0 12 14"><path d="M4 0.5 H8 V7 H11 V13 H1 V7 H4Z" fill="none" stroke="#d8c8b8" stroke-width="1"/><path d="M6 1 L6 13" stroke="#c8a888" stroke-width="0.9" fill="none"/></svg>
<div class="t" style="left:820.00px;top:109.84px;font-size:9.4px;color:#d0d0d0;letter-spacing:0.098px;">Мастер объект.</div>
<div class="a" style="left:886.1px;top:114.0px;width:0;height:0;border:2.4px solid transparent;border-top:2.9px solid #ececec;border-bottom:0"></div>
<svg style="left:911px;top:53px" width="28" height="27" viewBox="0 0 28 27"><rect x="0.8" y="0.8" width="17" height="21" fill="#5c6673" stroke="#6f9ad4" stroke-width="1"/><rect x="0.8" y="0.8" width="17" height="2.8" fill="#7fb0e8"/><rect x="3" y="5.5" width="5.6" height="6.6" fill="#7fb0e8"/><g transform="translate(19,18)"><path d="M-1.5 -8 H1.5 L2 -5.6 L4 -4.6 L6.2 -6 L8 -3.6 L6.2 -2 L6.6 0 L8.6 1.4 L7.4 4 L5 3.6 L3.6 5.2 L4 7.6 L1.2 8.4 L0 6.2 L-2 6.2 L-3.4 8.2 L-6 7 L-5.4 4.6 L-6.8 3 L-9 2.6 L-9 -0.4 L-6.8 -1 L-6 -3 L-7.4 -5 L-5.2 -7 L-3.2 -5.8 L-1.8 -6.2Z" fill="#e4e4e4"/><circle cx="-0.3" cy="0.3" r="2.8" fill="#4a4a4a"/></g></svg>
<div class="t" style="left:901.50px;top:82.04px;font-size:9.4px;color:#e6e6e6;letter-spacing:-0.010px;">Настройки</div>
<div class="t" style="left:901.50px;top:109.84px;font-size:9.4px;color:#d0d0d0;letter-spacing:-0.232px;">Настройки</div>
<div class="a" style="left:946.1px;top:114.0px;width:0;height:0;border:2.4px solid transparent;border-top:2.9px solid #ececec;border-bottom:0"></div>
<!-- left -->
<div class="a" style="left:0px;top:124px;width:285px;height:673px;background:#4f4f4f;"></div>
<div class="a" style="left:0px;top:125px;width:281px;height:16px;background:#6a6a6a;"></div>
<div class="t" style="left:4.00px;top:128.44px;font-size:9.4px;color:#d8d8d8;letter-spacing:-0.253px;">База элементов</div>
<svg style="left:255.5px;top:129.5px" width="7" height="8" viewBox="0 0 7 8"><path d="M1.6 0.5 H5.4 V4.5 H1.6Z M0.3 4.5 H6.7 M3.5 4.5 V7.8" stroke="#f0f0f0" stroke-width="1" fill="none"/></svg>
<svg style="left:269.5px;top:129.8px" width="7" height="7" viewBox="0 0 7 7"><path d="M0.5 0.5 L6.5 6.5 M6.5 0.5 L0.5 6.5" stroke="#f4f4f4" stroke-width="1.2"/></svg>
<div class="a" style="left:0px;top:141px;width:281px;height:635px;background:#5a5a5a;"></div>
<div class="a" style="left:2px;top:142px;width:278px;height:1px;background:#707070;"></div>
<div class="a" style="left:2px;top:142px;width:1px;height:633px;background:#707070;"></div>
<div class="a" style="left:279px;top:142px;width:1px;height:633px;background:#707070;"></div>
<div class="a" style="left:2px;top:774.2px;width:278px;height:1px;background:#707070;"></div>
<svg style="left:8px;top:147px" width="13" height="12" viewBox="0 0 13 12"><path d="M1.5 1 L11.5 11 M11 0.8 L1.6 11.2" stroke="#c44848" stroke-width="2.3" stroke-linecap="round"/><path d="M1.5 1 L11.5 11 M11 0.8 L1.6 11.2" stroke="#e8a0a0" stroke-width="0.9" stroke-dasharray="1 1.2"/></svg>
<svg style="left:26.5px;top:147.5px" width="13" height="11" viewBox="0 0 13 11"><path d="M0.5 2.5 H4.5 L5.5 3.6 H12 V10.5 H0.5Z" fill="#f3cf5c"/><path d="M0.5 5 H12 V10.5 H0.5Z" fill="#fbe391"/><path d="M9.5 0 V4.6 M7.2 2.3 H11.8 M7.9 0.7 L11.1 3.9 M11.1 0.7 L7.9 3.9" stroke="#f8f060" stroke-width="0.9"/></svg>
<div class="a" style="left:45.5px;top:146px;width:1px;height:14px;background:#777;"></div>
<svg style="left:52.5px;top:147px" width="12" height="13" viewBox="0 0 12 13"><rect x="4" y="0.5" width="7.5" height="9.5" fill="#cfe0f2" stroke="#3f74b8"/><rect x="6" y="1.5" width="3" height="2" fill="#3f74b8"/><path d="M0.8 3.4 Q0.8 1.4 3.2 1.4 Q5.6 1.4 5.6 3.4 Q5.6 5 3.6 5.6 V7.4" stroke="#2c5fa8" stroke-width="1.8" fill="none"/><rect x="2.4" y="8.8" width="2.4" height="2.2" fill="#2c5fa8"/><path d="M1.5 12 H6" stroke="#8ab0e0"/></svg>
<svg style="left:71.5px;top:147px" width="13" height="13" viewBox="0 0 13 13"><path d="M0.5 1 H5.5 V2.5 H4.5 V11 L3 12.5 L1.5 11 V2.5 H0.5Z" fill="#3f74b8"/><path d="M2 4 L4 5.5 L2 7 L4 8.5 L2 10" stroke="#cfe0f2" stroke-width="0.7" fill="none"/><path d="M7.5 1 H12.5 V2.5 H11.5 V11 L10 12.5 L8.5 11 V2.5 H7.5Z" fill="#e28a8a"/><path d="M9 4 L11 5.5 L9 7 L11 8.5 L9 10" stroke="#f8d8d8" stroke-width="0.7" fill="none"/></svg>
<svg style="left:90px;top:147.5px" width="13" height="11" viewBox="0 0 13 11"><rect x="0.5" y="0.5" width="12" height="10" fill="#dce8f4" stroke="#7fa4cc"/><path d="M1.5 2 V5.5 H6" stroke="#111" stroke-width="1.2" fill="none"/><circle cx="8" cy="6.8" r="2.6" fill="none" stroke="#222" stroke-width="1.1"/></svg>
<svg style="left:108.5px;top:147.5px" width="13" height="11" viewBox="0 0 13 11"><path d="M0.5 3 H12 V10 H0.5Z" fill="#f4f7fb" stroke="#3f74b8"/><circle cx="7.6" cy="3.6" r="3" fill="#b8cfe8" stroke="#e8f0f8" stroke-width="0.8"/><path d="M9.6 5.8 L12 8.4" stroke="#9a8a6a" stroke-width="1.4"/></svg>
<div class="a" style="left:127px;top:146px;width:1px;height:14px;background:#777;"></div>
<svg style="left:134.5px;top:147px" width="11" height="12" viewBox="0 0 11 12"><rect x="0.5" y="0.5" width="10" height="11" fill="#dfe8f2" stroke="#4a78b8"/><path d="M3.2 3.4 H7.8 L3.2 8.4 H7.8" stroke="#d03030" stroke-width="1.5" fill="none"/><path d="M2 2 L4.4 3.4 L2 4.8Z" fill="#d03030"/></svg>
<div class="a" style="left:151px;top:146px;width:1px;height:14px;background:#777;"></div>
<div class="a" style="left:6px;top:163px;width:271px;height:1px;background:#8a8a8a;"></div>
<div class="a" style="left:6px;top:163px;width:1px;height:611px;background:#8a8a8a;"></div>
<div class="a" style="left:262.3px;top:164px;width:14.9px;height:610.2px;background:#f0f0f0;"></div>
<div class="a" style="left:7px;top:758.8px;width:256px;height:15.4px;background:#f0f0f0;"></div>
<div class="a" style="left:269.2px;top:291.5px;width:1.9px;height:425.3px;background:#707070;"></div>
<div class="a" style="left:20px;top:765.8px;width:206.5px;height:1.7px;background:#707070;"></div>
<div class="a" style="left:15.5px;top:164px;width:1px;height:480px;background:repeating-linear-gradient(#9a9a9a 0 1px,transparent 1px 2px)"></div>
<div class="a" style="left:31px;top:164px;width:1px;height:129px;background:repeating-linear-gradient(#9a9a9a 0 1px,transparent 1px 2px)"></div>
<div class="a" style="left:46.5px;top:164px;width:1px;height:77px;background:repeating-linear-gradient(#9a9a9a 0 1px,transparent 1px 2px)"></div>
<div class="a" style="left:62px;top:177px;width:1px;height:59px;background:repeating-linear-gradient(#9a9a9a 0 1px,transparent 1px 2px)"></div>
<div class="a" style="left:62px;top:358px;width:1px;height:195px;background:repeating-linear-gradient(#9a9a9a 0 1px,transparent 1px 2px)"></div>
<div class="a" style="left:77.5px;top:384px;width:1px;height:164px;background:repeating-linear-gradient(#9a9a9a 0 1px,transparent 1px 2px)"></div>
<div class="a" style="left:15.5px;top:306px;width:1px;height:338px;background:repeating-linear-gradient(#9a9a9a 0 1px,transparent 1px 2px)"></div>
<div class="a" style="left:0;top:0;width:262.3px;height:758.8px;overflow:hidden"><svg style="left:59.5px;top:167.1px" width="5" height="7" viewBox="0 0 5 7"><path d="M0.8 0.5 L4 3.5 L0.8 6.5" stroke="#8c8c8c" stroke-width="1" fill="none"/></svg><div class="a" style="left:67.7px;top:171px;width:4.0px;height:1px;background:repeating-linear-gradient(90deg,#9a9a9a 0 1px,transparent 1px 2px)"></div><svg style="left:71.7px;top:165.4px" width="12" height="10" viewBox="0 0 12 10"><path d="M0.5 2 Q0.5 0.8 1.6 0.8 H4.6 L5.8 2.2 H10.6 Q11.6 2.2 11.6 3.2 V9 Q11.6 9.8 10.8 9.8 H1.3 Q0.5 9.8 0.5 9Z" fill="#e8b93c"/><path d="M0.5 4 H11.6 V9 Q11.6 9.8 10.8 9.8 H1.3 Q0.5 9.8 0.5 9Z" fill="#fbe08a"/><path d="M0.5 8.2 H11.6 V9 Q11.6 9.8 10.8 9.8 H1.3 Q0.5 9.8 0.5 9Z" fill="#efc044"/></svg><div class="t" style="left:87.20px;top:164.73px;font-size:10.6px;color:#e0e0e0;transform:scaleX(0.8248);transform-origin:0 0;">Серия 3.503.1-81 Выпуск 7-1</div><div class="a" style="left:62.2px;top:184px;width:9.5px;height:1px;background:repeating-linear-gradient(90deg,#9a9a9a 0 1px,transparent 1px 2px)"></div><svg style="left:72.7px;top:178.0px" width="10" height="10" viewBox="0 0 10 10"><path d="M1.2 3 Q1.2 0.6 3 0.6 Q4.8 0.6 4.8 3 V5.2 H7.6 Q9.4 5.2 9.4 7.2 V8 H7.8 V9.4 H1.2Z" fill="#c4d8f0" stroke="#2a5898" stroke-width="1"/><path d="M2.5 2.6 V8 H6.2" stroke="#f4f8fd" stroke-width="1.3" fill="none"/><path d="M5 6.6 H8" stroke="#9cbce4" stroke-width="0.9"/></svg><div class="t" style="left:87.20px;top:177.73px;font-size:10.6px;color:#e0e0e0;transform:scaleX(0.8420);transform-origin:0 0;">Балки БО</div><div class="a" style="left:62.2px;top:197px;width:9.5px;height:1px;background:repeating-linear-gradient(90deg,#9a9a9a 0 1px,transparent 1px 2px)"></div><svg style="left:72.7px;top:191.0px" width="10" height="10" viewBox="0 0 10 10"><path d="M1.2 3 Q1.2 0.6 3 0.6 Q4.8 0.6 4.8 3 V5.2 H7.6 Q9.4 5.2 9.4 7.2 V8 H7.8 V9.4 H1.2Z" fill="#c4d8f0" stroke="#2a5898" stroke-width="1"/><path d="M2.5 2.6 V8 H6.2" stroke="#f4f8fd" stroke-width="1.3" fill="none"/><path d="M5 6.6 H8" stroke="#9cbce4" stroke-width="0.9"/></svg><div class="t" style="left:87.20px;top:190.73px;font-size:10.6px;color:#e0e0e0;transform:scaleX(0.8854);transform-origin:0 0;">Балки БФ</div><div class="a" style="left:62.2px;top:210px;width:9.5px;height:1px;background:repeating-linear-gradient(90deg,#9a9a9a 0 1px,transparent 1px 2px)"></div><svg style="left:72.7px;top:204.0px" width="10" height="10" viewBox="0 0 10 10"><path d="M1.2 3 Q1.2 0.6 3 0.6 Q4.8 0.6 4.8 3 V5.2 H7.6 Q9.4 5.2 9.4 7.2 V8 H7.8 V9.4 H1.2Z" fill="#c4d8f0" stroke="#2a5898" stroke-width="1"/><path d="M2.5 2.6 V8 H6.2" stroke="#f4f8fd" stroke-width="1.3" fill="none"/><path d="M5 6.6 H8" stroke="#9cbce4" stroke-width="0.9"/></svg><div class="t" style="left:87.20px;top:203.73px;font-size:10.6px;color:#e0e0e0;transform:scaleX(0.8763);transform-origin:0 0;">Балки ДБ</div><div class="a" style="left:62.2px;top:223px;width:9.5px;height:1px;background:repeating-linear-gradient(90deg,#9a9a9a 0 1px,transparent 1px 2px)"></div><svg style="left:72.7px;top:217.0px" width="10" height="10" viewBox="0 0 10 10"><path d="M1.2 3 Q1.2 0.6 3 0.6 Q4.8 0.6 4.8 3 V5.2 H7.6 Q9.4 5.2 9.4 7.2 V8 H7.8 V9.4 H1.2Z" fill="#c4d8f0" stroke="#2a5898" stroke-width="1"/><path d="M2.5 2.6 V8 H6.2" stroke="#f4f8fd" stroke-width="1.3" fill="none"/><path d="M5 6.6 H8" stroke="#9cbce4" stroke-width="0.9"/></svg><div class="t" style="left:87.20px;top:216.73px;font-size:10.6px;color:#e0e0e0;transform:scaleX(0.8605);transform-origin:0 0;">Балки КБ</div><div class="a" style="left:62.2px;top:236px;width:9.5px;height:1px;background:repeating-linear-gradient(90deg,#9a9a9a 0 1px,transparent 1px 2px)"></div><svg style="left:72.7px;top:230.0px" width="10" height="10" viewBox="0 0 10 10"><path d="M1.2 3 Q1.2 0.6 3 0.6 Q4.8 0.6 4.8 3 V5.2 H7.6 Q9.4 5.2 9.4 7.2 V8 H7.8 V9.4 H1.2Z" fill="#c4d8f0" stroke="#2a5898" stroke-width="1"/><path d="M2.5 2.6 V8 H6.2" stroke="#f4f8fd" stroke-width="1.3" fill="none"/><path d="M5 6.6 H8" stroke="#9cbce4" stroke-width="0.9"/></svg><div class="t" style="left:87.20px;top:229.73px;font-size:10.6px;color:#e0e0e0;transform:scaleX(0.8943);transform-origin:0 0;">Балки ФБ6</div><svg style="left:44.0px;top:245.1px" width="5" height="7" viewBox="0 0 5 7"><path d="M0.8 0.5 L4 3.5 L0.8 6.5" stroke="#8c8c8c" stroke-width="1" fill="none"/></svg><div class="a" style="left:52.2px;top:249px;width:4.0px;height:1px;background:repeating-linear-gradient(90deg,#9a9a9a 0 1px,transparent 1px 2px)"></div><svg style="left:56.2px;top:243.4px" width="12" height="10" viewBox="0 0 12 10"><path d="M0.5 2 Q0.5 0.8 1.6 0.8 H4.6 L5.8 2.2 H10.6 Q11.6 2.2 11.6 3.2 V9 Q11.6 9.8 10.8 9.8 H1.3 Q0.5 9.8 0.5 9Z" fill="#e8b93c"/><path d="M0.5 4 H11.6 V9 Q11.6 9.8 10.8 9.8 H1.3 Q0.5 9.8 0.5 9Z" fill="#fbe08a"/><path d="M0.5 8.2 H11.6 V9 Q11.6 9.8 10.8 9.8 H1.3 Q0.5 9.8 0.5 9Z" fill="#efc044"/></svg><div class="t" style="left:71.70px;top:242.73px;font-size:10.6px;color:#e0e0e0;transform:scaleX(0.8394);transform-origin:0 0;">Колонны</div><svg style="left:44.0px;top:258.1px" width="5" height="7" viewBox="0 0 5 7"><path d="M0.8 0.5 L4 3.5 L0.8 6.5" stroke="#8c8c8c" stroke-width="1" fill="none"/></svg><div class="a" style="left:52.2px;top:262px;width:4.0px;height:1px;background:repeating-linear-gradient(90deg,#9a9a9a 0 1px,transparent 1px 2px)"></div><svg style="left:56.2px;top:256.40000000000003px" width="12" height="10" viewBox="0 0 12 10"><path d="M0.5 2 Q0.5 0.8 1.6 0.8 H4.6 L5.8 2.2 H10.6 Q11.6 2.2 11.6 3.2 V9 Q11.6 9.8 10.8 9.8 H1.3 Q0.5 9.8 0.5 9Z" fill="#e8b93c"/><path d="M0.5 4 H11.6 V9 Q11.6 9.8 10.8 9.8 H1.3 Q0.5 9.8 0.5 9Z" fill="#fbe08a"/><path d="M0.5 8.2 H11.6 V9 Q11.6 9.8 10.8 9.8 H1.3 Q0.5 9.8 0.5 9Z" fill="#efc044"/></svg><div class="t" style="left:71.70px;top:255.73px;font-size:10.6px;color:#e0e0e0;transform:scaleX(0.8446);transform-origin:0 0;">Плиты перекрытий</div><svg style="left:44.0px;top:271.1px" width="5" height="7" viewBox="0 0 5 7"><path d="M0.8 0.5 L4 3.5 L0.8 6.5" stroke="#8c8c8c" stroke-width="1" fill="none"/></svg><div class="a" style="left:52.2px;top:275px;width:4.0px;height:1px;background:repeating-linear-gradient(90deg,#9a9a9a 0 1px,transparent 1px 2px)"></div><svg style="left:56.2px;top:269.40000000000003px" width="12" height="10" viewBox="0 0 12 10"><path d="M0.5 2 Q0.5 0.8 1.6 0.8 H4.6 L5.8 2.2 H10.6 Q11.6 2.2 11.6 3.2 V9 Q11.6 9.8 10.8 9.8 H1.3 Q0.5 9.8 0.5 9Z" fill="#e8b93c"/><path d="M0.5 4 H11.6 V9 Q11.6 9.8 10.8 9.8 H1.3 Q0.5 9.8 0.5 9Z" fill="#fbe08a"/><path d="M0.5 8.2 H11.6 V9 Q11.6 9.8 10.8 9.8 H1.3 Q0.5 9.8 0.5 9Z" fill="#efc044"/></svg><div class="t" style="left:71.70px;top:268.73px;font-size:10.6px;color:#e0e0e0;transform:scaleX(0.8636);transform-origin:0 0;">Ригели</div><svg style="left:44.0px;top:284.1px" width="5" height="7" viewBox="0 0 5 7"><path d="M0.8 0.5 L4 3.5 L0.8 6.5" stroke="#8c8c8c" stroke-width="1" fill="none"/></svg><div class="a" style="left:52.2px;top:288px;width:4.0px;height:1px;background:repeating-linear-gradient(90deg,#9a9a9a 0 1px,transparent 1px 2px)"></div><svg style="left:56.2px;top:282.40000000000003px" width="12" height="10" viewBox="0 0 12 10"><path d="M0.5 2 Q0.5 0.8 1.6 0.8 H4.6 L5.8 2.2 H10.6 Q11.6 2.2 11.6 3.2 V9 Q11.6 9.8 10.8 9.8 H1.3 Q0.5 9.8 0.5 9Z" fill="#e8b93c"/><path d="M0.5 4 H11.6 V9 Q11.6 9.8 10.8 9.8 H1.3 Q0.5 9.8 0.5 9Z" fill="#fbe08a"/><path d="M0.5 8.2 H11.6 V9 Q11.6 9.8 10.8 9.8 H1.3 Q0.5 9.8 0.5 9Z" fill="#efc044"/></svg><div class="t" style="left:71.70px;top:281.73px;font-size:10.6px;color:#e0e0e0;transform:scaleX(0.8007);transform-origin:0 0;">Ступени</div><svg style="left:27.0px;top:298.1px" width="8" height="5" viewBox="0 0 8 5"><path d="M0.6 0.8 L4 4 L7.4 0.8" stroke="#1e1e1e" stroke-width="1.2" fill="none"/></svg><div class="a" style="left:36.7px;top:301px;width:4.0px;height:1px;background:repeating-linear-gradient(90deg,#9a9a9a 0 1px,transparent 1px 2px)"></div><svg style="left:40.7px;top:295.40000000000003px" width="12" height="10" viewBox="0 0 12 10"><path d="M0.5 2 Q0.5 0.8 1.6 0.8 H4.6 L5.8 2.2 H10.6 Q11.6 2.2 11.6 3.2 V9 Q11.6 9.8 10.8 9.8 H1.3 Q0.5 9.8 0.5 9Z" fill="#e8b93c"/><path d="M0.5 4 H11.6 V9 Q11.6 9.8 10.8 9.8 H1.3 Q0.5 9.8 0.5 9Z" fill="#fbe08a"/><path d="M0.5 8.2 H11.6 V9 Q11.6 9.8 10.8 9.8 H1.3 Q0.5 9.8 0.5 9Z" fill="#efc044"/></svg><div class="t" style="left:56.20px;top:294.73px;font-size:10.6px;color:#e0e0e0;transform:scaleX(0.8731);transform-origin:0 0;">КМ</div><svg style="left:44.0px;top:310.1px" width="5" height="7" viewBox="0 0 5 7"><path d="M0.8 0.5 L4 3.5 L0.8 6.5" stroke="#8c8c8c" stroke-width="1" fill="none"/></svg><div class="a" style="left:52.2px;top:314px;width:4.0px;height:1px;background:repeating-linear-gradient(90deg,#9a9a9a 0 1px,transparent 1px 2px)"></div><svg style="left:56.2px;top:308.40000000000003px" width="12" height="10" viewBox="0 0 12 10"><path d="M0.5 2 Q0.5 0.8 1.6 0.8 H4.6 L5.8 2.2 H10.6 Q11.6 2.2 11.6 3.2 V9 Q11.6 9.8 10.8 9.8 H1.3 Q0.5 9.8 0.5 9Z" fill="#e8b93c"/><path d="M0.5 4 H11.6 V9 Q11.6 9.8 10.8 9.8 H1.3 Q0.5 9.8 0.5 9Z" fill="#fbe08a"/><path d="M0.5 8.2 H11.6 V9 Q11.6 9.8 10.8 9.8 H1.3 Q0.5 9.8 0.5 9Z" fill="#efc044"/></svg><div class="t" style="left:71.70px;top:307.73px;font-size:10.6px;color:#e0e0e0;transform:scaleX(0.8595);transform-origin:0 0;">Детали крепления</div><svg style="left:44.0px;top:323.1px" width="5" height="7" viewBox="0 0 5 7"><path d="M0.8 0.5 L4 3.5 L0.8 6.5" stroke="#8c8c8c" stroke-width="1" fill="none"/></svg><div class="a" style="left:52.2px;top:327px;width:4.0px;height:1px;background:repeating-linear-gradient(90deg,#9a9a9a 0 1px,transparent 1px 2px)"></div><svg style="left:56.2px;top:321.40000000000003px" width="12" height="10" viewBox="0 0 12 10"><path d="M0.5 2 Q0.5 0.8 1.6 0.8 H4.6 L5.8 2.2 H10.6 Q11.6 2.2 11.6 3.2 V9 Q11.6 9.8 10.8 9.8 H1.3 Q0.5 9.8 0.5 9Z" fill="#e8b93c"/><path d="M0.5 4 H11.6 V9 Q11.6 9.8 10.8 9.8 H1.3 Q0.5 9.8 0.5 9Z" fill="#fbe08a"/><path d="M0.5 8.2 H11.6 V9 Q11.6 9.8 10.8 9.8 H1.3 Q0.5 9.8 0.5 9Z" fill="#efc044"/></svg><div class="t" style="left:71.70px;top:320.73px;font-size:10.6px;color:#e0e0e0;transform:scaleX(0.8541);transform-origin:0 0;">Лестницы</div><svg style="left:42.5px;top:337.1px" width="8" height="5" viewBox="0 0 8 5"><path d="M0.6 0.8 L4 4 L7.4 0.8" stroke="#1e1e1e" stroke-width="1.2" fill="none"/></svg><div class="a" style="left:52.2px;top:340px;width:4.0px;height:1px;background:repeating-linear-gradient(90deg,#9a9a9a 0 1px,transparent 1px 2px)"></div><svg style="left:56.2px;top:334.40000000000003px" width="12" height="10" viewBox="0 0 12 10"><path d="M0.5 2 Q0.5 0.8 1.6 0.8 H4.6 L5.8 2.2 H10.6 Q11.6 2.2 11.6 3.2 V9 Q11.6 9.8 10.8 9.8 H1.3 Q0.5 9.8 0.5 9Z" fill="#e8b93c"/><path d="M0.5 4 H11.6 V9 Q11.6 9.8 10.8 9.8 H1.3 Q0.5 9.8 0.5 9Z" fill="#fbe08a"/><path d="M0.5 8.2 H11.6 V9 Q11.6 9.8 10.8 9.8 H1.3 Q0.5 9.8 0.5 9Z" fill="#efc044"/></svg><div class="t" style="left:71.70px;top:333.73px;font-size:10.6px;color:#e0e0e0;transform:scaleX(0.8081);transform-origin:0 0;">Профили</div><svg style="left:58.0px;top:350.1px" width="8" height="5" viewBox="0 0 8 5"><path d="M0.6 0.8 L4 4 L7.4 0.8" stroke="#1e1e1e" stroke-width="1.2" fill="none"/></svg><div class="a" style="left:67.7px;top:353px;width:4.0px;height:1px;background:repeating-linear-gradient(90deg,#9a9a9a 0 1px,transparent 1px 2px)"></div><svg style="left:71.7px;top:347.40000000000003px" width="12" height="10" viewBox="0 0 12 10"><path d="M0.5 2 Q0.5 0.8 1.6 0.8 H4.6 L5.8 2.2 H10.6 Q11.6 2.2 11.6 3.2 V9 Q11.6 9.8 10.8 9.8 H1.3 Q0.5 9.8 0.5 9Z" fill="#e8b93c"/><path d="M0.5 4 H11.6 V9 Q11.6 9.8 10.8 9.8 H1.3 Q0.5 9.8 0.5 9Z" fill="#fbe08a"/><path d="M0.5 8.2 H11.6 V9 Q11.6 9.8 10.8 9.8 H1.3 Q0.5 9.8 0.5 9Z" fill="#efc044"/></svg><div class="t" style="left:87.20px;top:346.73px;font-size:10.6px;color:#e0e0e0;transform:scaleX(0.8709);transform-origin:0 0;">Двутавры</div><svg style="left:75.0px;top:362.1px" width="5" height="7" viewBox="0 0 5 7"><path d="M0.8 0.5 L4 3.5 L0.8 6.5" stroke="#8c8c8c" stroke-width="1" fill="none"/></svg><div class="a" style="left:83.2px;top:366px;width:4.0px;height:1px;background:repeating-linear-gradient(90deg,#9a9a9a 0 1px,transparent 1px 2px)"></div><svg style="left:87.2px;top:360.40000000000003px" width="12" height="10" viewBox="0 0 12 10"><path d="M0.5 2 Q0.5 0.8 1.6 0.8 H4.6 L5.8 2.2 H10.6 Q11.6 2.2 11.6 3.2 V9 Q11.6 9.8 10.8 9.8 H1.3 Q0.5 9.8 0.5 9Z" fill="#e8b93c"/><path d="M0.5 4 H11.6 V9 Q11.6 9.8 10.8 9.8 H1.3 Q0.5 9.8 0.5 9Z" fill="#fbe08a"/><path d="M0.5 8.2 H11.6 V9 Q11.6 9.8 10.8 9.8 H1.3 Q0.5 9.8 0.5 9Z" fill="#efc044"/></svg><div class="t" style="left:102.70px;top:359.73px;font-size:10.6px;color:#e0e0e0;transform:scaleX(0.8185);transform-origin:0 0;">Профили детали</div><svg style="left:75.0px;top:375.1px" width="5" height="7" viewBox="0 0 5 7"><path d="M0.8 0.5 L4 3.5 L0.8 6.5" stroke="#8c8c8c" stroke-width="1" fill="none"/></svg><div class="a" style="left:83.2px;top:379px;width:4.0px;height:1px;background:repeating-linear-gradient(90deg,#9a9a9a 0 1px,transparent 1px 2px)"></div><svg style="left:87.2px;top:373.40000000000003px" width="12" height="10" viewBox="0 0 12 10"><path d="M0.5 2 Q0.5 0.8 1.6 0.8 H4.6 L5.8 2.2 H10.6 Q11.6 2.2 11.6 3.2 V9 Q11.6 9.8 10.8 9.8 H1.3 Q0.5 9.8 0.5 9Z" fill="#e8b93c"/><path d="M0.5 4 H11.6 V9 Q11.6 9.8 10.8 9.8 H1.3 Q0.5 9.8 0.5 9Z" fill="#fbe08a"/><path d="M0.5 8.2 H11.6 V9 Q11.6 9.8 10.8 9.8 H1.3 Q0.5 9.8 0.5 9Z" fill="#efc044"/></svg><div class="t" style="left:102.70px;top:372.73px;font-size:10.6px;color:#e0e0e0;transform:scaleX(0.8536);transform-origin:0 0;">Рёбра жёсткости</div><div class="a" style="left:77.7px;top:392px;width:9.5px;height:1px;background:repeating-linear-gradient(90deg,#9a9a9a 0 1px,transparent 1px 2px)"></div><svg style="left:88.2px;top:386.0px" width="10" height="10" viewBox="0 0 10 10"><path d="M1.2 3 Q1.2 0.6 3 0.6 Q4.8 0.6 4.8 3 V5.2 H7.6 Q9.4 5.2 9.4 7.2 V8 H7.8 V9.4 H1.2Z" fill="#c4d8f0" stroke="#2a5898" stroke-width="1"/><path d="M2.5 2.6 V8 H6.2" stroke="#f4f8fd" stroke-width="1.3" fill="none"/><path d="M5 6.6 H8" stroke="#9cbce4" stroke-width="0.9"/></svg><div class="t" style="left:102.70px;top:385.73px;font-size:10.6px;color:#e0e0e0;transform:scaleX(0.8363);transform-origin:0 0;">CSN 425550 Двутавр</div><div class="a" style="left:77.7px;top:405px;width:9.5px;height:1px;background:repeating-linear-gradient(90deg,#9a9a9a 0 1px,transparent 1px 2px)"></div><svg style="left:88.2px;top:399.0px" width="10" height="10" viewBox="0 0 10 10"><path d="M1.2 3 Q1.2 0.6 3 0.6 Q4.8 0.6 4.8 3 V5.2 H7.6 Q9.4 5.2 9.4 7.2 V8 H7.8 V9.4 H1.2Z" fill="#c4d8f0" stroke="#2a5898" stroke-width="1"/><path d="M2.5 2.6 V8 H6.2" stroke="#f4f8fd" stroke-width="1.3" fill="none"/><path d="M5 6.6 H8" stroke="#9cbce4" stroke-width="0.9"/></svg><div class="t" style="left:102.70px;top:398.73px;font-size:10.6px;color:#e0e0e0;transform:scaleX(0.8419);transform-origin:0 0;">DIN 1025</div><div class="a" style="left:77.7px;top:418px;width:9.5px;height:1px;background:repeating-linear-gradient(90deg,#9a9a9a 0 1px,transparent 1px 2px)"></div><svg style="left:88.2px;top:412.0px" width="10" height="10" viewBox="0 0 10 10"><path d="M1.2 3 Q1.2 0.6 3 0.6 Q4.8 0.6 4.8 3 V5.2 H7.6 Q9.4 5.2 9.4 7.2 V8 H7.8 V9.4 H1.2Z" fill="#c4d8f0" stroke="#2a5898" stroke-width="1"/><path d="M2.5 2.6 V8 H6.2" stroke="#f4f8fd" stroke-width="1.3" fill="none"/><path d="M5 6.6 H8" stroke="#9cbce4" stroke-width="0.9"/></svg><div class="t" style="left:102.70px;top:411.73px;font-size:10.6px;color:#e0e0e0;transform:scaleX(0.8228);transform-origin:0 0;">DIN 1025-1</div><div class="a" style="left:77.7px;top:431px;width:9.5px;height:1px;background:repeating-linear-gradient(90deg,#9a9a9a 0 1px,transparent 1px 2px)"></div><svg style="left:88.2px;top:425.0px" width="10" height="10" viewBox="0 0 10 10"><path d="M1.2 3 Q1.2 0.6 3 0.6 Q4.8 0.6 4.8 3 V5.2 H7.6 Q9.4 5.2 9.4 7.2 V8 H7.8 V9.4 H1.2Z" fill="#c4d8f0" stroke="#2a5898" stroke-width="1"/><path d="M2.5 2.6 V8 H6.2" stroke="#f4f8fd" stroke-width="1.3" fill="none"/><path d="M5 6.6 H8" stroke="#9cbce4" stroke-width="0.9"/></svg><div class="t" style="left:102.70px;top:424.73px;font-size:10.6px;color:#e0e0e0;transform:scaleX(0.8320);transform-origin:0 0;">DIN 1025-2</div><div class="a" style="left:77.7px;top:444px;width:9.5px;height:1px;background:repeating-linear-gradient(90deg,#9a9a9a 0 1px,transparent 1px 2px)"></div><svg style="left:88.2px;top:438.0px" width="10" height="10" viewBox="0 0 10 10"><path d="M1.2 3 Q1.2 0.6 3 0.6 Q4.8 0.6 4.8 3 V5.2 H7.6 Q9.4 5.2 9.4 7.2 V8 H7.8 V9.4 H1.2Z" fill="#c4d8f0" stroke="#2a5898" stroke-width="1"/><path d="M2.5 2.6 V8 H6.2" stroke="#f4f8fd" stroke-width="1.3" fill="none"/><path d="M5 6.6 H8" stroke="#9cbce4" stroke-width="0.9"/></svg><div class="t" style="left:102.70px;top:437.73px;font-size:10.6px;color:#e0e0e0;transform:scaleX(0.8320);transform-origin:0 0;">DIN 1025-3</div><div class="a" style="left:77.7px;top:457px;width:9.5px;height:1px;background:repeating-linear-gradient(90deg,#9a9a9a 0 1px,transparent 1px 2px)"></div><svg style="left:88.2px;top:451.0px" width="10" height="10" viewBox="0 0 10 10"><path d="M1.2 3 Q1.2 0.6 3 0.6 Q4.8 0.6 4.8 3 V5.2 H7.6 Q9.4 5.2 9.4 7.2 V8 H7.8 V9.4 H1.2Z" fill="#c4d8f0" stroke="#2a5898" stroke-width="1"/><path d="M2.5 2.6 V8 H6.2" stroke="#f4f8fd" stroke-width="1.3" fill="none"/><path d="M5 6.6 H8" stroke="#9cbce4" stroke-width="0.9"/></svg><div class="t" style="left:102.70px;top:450.73px;font-size:10.6px;color:#e0e0e0;transform:scaleX(0.8261);transform-origin:0 0;">ISO 657 15</div><div class="a" style="left:77.7px;top:470px;width:9.5px;height:1px;background:repeating-linear-gradient(90deg,#9a9a9a 0 1px,transparent 1px 2px)"></div><svg style="left:88.2px;top:464.0px" width="10" height="10" viewBox="0 0 10 10"><path d="M1.2 3 Q1.2 0.6 3 0.6 Q4.8 0.6 4.8 3 V5.2 H7.6 Q9.4 5.2 9.4 7.2 V8 H7.8 V9.4 H1.2Z" fill="#c4d8f0" stroke="#2a5898" stroke-width="1"/><path d="M2.5 2.6 V8 H6.2" stroke="#f4f8fd" stroke-width="1.3" fill="none"/><path d="M5 6.6 H8" stroke="#9cbce4" stroke-width="0.9"/></svg><div class="t" style="left:102.70px;top:463.73px;font-size:10.6px;color:#e0e0e0;transform:scaleX(0.8261);transform-origin:0 0;">ISO 657 16</div><div class="a" style="left:77.7px;top:483px;width:9.5px;height:1px;background:repeating-linear-gradient(90deg,#9a9a9a 0 1px,transparent 1px 2px)"></div><svg style="left:88.2px;top:477.0px" width="10" height="10" viewBox="0 0 10 10"><path d="M1.2 3 Q1.2 0.6 3 0.6 Q4.8 0.6 4.8 3 V5.2 H7.6 Q9.4 5.2 9.4 7.2 V8 H7.8 V9.4 H1.2Z" fill="#c4d8f0" stroke="#2a5898" stroke-width="1"/><path d="M2.5 2.6 V8 H6.2" stroke="#f4f8fd" stroke-width="1.3" fill="none"/><path d="M5 6.6 H8" stroke="#9cbce4" stroke-width="0.9"/></svg><div class="t" style="left:102.70px;top:476.73px;font-size:10.6px;color:#e0e0e0;transform:scaleX(0.8317);transform-origin:0 0;">ГОСТ 8239-89</div><div class="a" style="left:77.7px;top:496px;width:9.5px;height:1px;background:repeating-linear-gradient(90deg,#9a9a9a 0 1px,transparent 1px 2px)"></div><svg style="left:88.2px;top:490.0px" width="10" height="10" viewBox="0 0 10 10"><path d="M1.2 3 Q1.2 0.6 3 0.6 Q4.8 0.6 4.8 3 V5.2 H7.6 Q9.4 5.2 9.4 7.2 V8 H7.8 V9.4 H1.2Z" fill="#c4d8f0" stroke="#2a5898" stroke-width="1"/><path d="M2.5 2.6 V8 H6.2" stroke="#f4f8fd" stroke-width="1.3" fill="none"/><path d="M5 6.6 H8" stroke="#9cbce4" stroke-width="0.9"/></svg><div class="t" style="left:102.70px;top:489.73px;font-size:10.6px;color:#e0e0e0;transform:scaleX(0.8250);transform-origin:0 0;">ГОСТ 19425-74</div><div class="a" style="left:77.7px;top:509px;width:9.5px;height:1px;background:repeating-linear-gradient(90deg,#9a9a9a 0 1px,transparent 1px 2px)"></div><svg style="left:88.2px;top:503.0px" width="10" height="10" viewBox="0 0 10 10"><path d="M1.2 3 Q1.2 0.6 3 0.6 Q4.8 0.6 4.8 3 V5.2 H7.6 Q9.4 5.2 9.4 7.2 V8 H7.8 V9.4 H1.2Z" fill="#c4d8f0" stroke="#2a5898" stroke-width="1"/><path d="M2.5 2.6 V8 H6.2" stroke="#f4f8fd" stroke-width="1.3" fill="none"/><path d="M5 6.6 H8" stroke="#9cbce4" stroke-width="0.9"/></svg><div class="t" style="left:102.70px;top:502.73px;font-size:10.6px;color:#e0e0e0;transform:scaleX(0.8330);transform-origin:0 0;">ГОСТ 26020-83</div><div class="a" style="left:77.7px;top:522px;width:9.5px;height:1px;background:repeating-linear-gradient(90deg,#9a9a9a 0 1px,transparent 1px 2px)"></div><div class="a" style="left:85.3px;top:515.3000000000001px;width:100.6px;height:12.6px;background:#4a4a4a;border-radius:1px"></div><svg style="left:88.2px;top:516.0px" width="10" height="10" viewBox="0 0 10 10"><path d="M1.2 3 Q1.2 0.6 3 0.6 Q4.8 0.6 4.8 3 V5.2 H7.6 Q9.4 5.2 9.4 7.2 V8 H7.8 V9.4 H1.2Z" fill="#c4d8f0" stroke="#2a5898" stroke-width="1"/><path d="M2.5 2.6 V8 H6.2" stroke="#f4f8fd" stroke-width="1.3" fill="none"/><path d="M5 6.6 H8" stroke="#9cbce4" stroke-width="0.9"/></svg><div class="t" style="left:102.70px;top:515.73px;font-size:10.6px;color:#111;transform:scaleX(0.8292);transform-origin:0 0;">ГОСТ Р 57837-2017</div><div class="a" style="left:77.7px;top:535px;width:9.5px;height:1px;background:repeating-linear-gradient(90deg,#9a9a9a 0 1px,transparent 1px 2px)"></div><svg style="left:88.2px;top:529.0px" width="10" height="10" viewBox="0 0 10 10"><path d="M1.2 3 Q1.2 0.6 3 0.6 Q4.8 0.6 4.8 3 V5.2 H7.6 Q9.4 5.2 9.4 7.2 V8 H7.8 V9.4 H1.2Z" fill="#c4d8f0" stroke="#2a5898" stroke-width="1"/><path d="M2.5 2.6 V8 H6.2" stroke="#f4f8fd" stroke-width="1.3" fill="none"/><path d="M5 6.6 H8" stroke="#9cbce4" stroke-width="0.9"/></svg><div class="t" style="left:102.70px;top:528.73px;font-size:10.6px;color:#e0e0e0;transform:scaleX(0.8311);transform-origin:0 0;">СТО АСЧМ 20-93</div><div class="a" style="left:77.7px;top:548px;width:9.5px;height:1px;background:repeating-linear-gradient(90deg,#9a9a9a 0 1px,transparent 1px 2px)"></div><svg style="left:88.2px;top:542.0px" width="10" height="10" viewBox="0 0 10 10"><path d="M1.2 3 Q1.2 0.6 3 0.6 Q4.8 0.6 4.8 3 V5.2 H7.6 Q9.4 5.2 9.4 7.2 V8 H7.8 V9.4 H1.2Z" fill="#c4d8f0" stroke="#2a5898" stroke-width="1"/><path d="M2.5 2.6 V8 H6.2" stroke="#f4f8fd" stroke-width="1.3" fill="none"/><path d="M5 6.6 H8" stroke="#9cbce4" stroke-width="0.9"/></svg><div class="t" style="left:102.70px;top:541.73px;font-size:10.6px;color:#e0e0e0;transform:scaleX(0.8281);transform-origin:0 0;">ТУ 0925-016-00186269-2016</div><svg style="left:59.5px;top:557.1px" width="5" height="7" viewBox="0 0 5 7"><path d="M0.8 0.5 L4 3.5 L0.8 6.5" stroke="#8c8c8c" stroke-width="1" fill="none"/></svg><div class="a" style="left:67.7px;top:561px;width:4.0px;height:1px;background:repeating-linear-gradient(90deg,#9a9a9a 0 1px,transparent 1px 2px)"></div><svg style="left:71.7px;top:555.4px" width="12" height="10" viewBox="0 0 12 10"><path d="M0.5 2 Q0.5 0.8 1.6 0.8 H4.6 L5.8 2.2 H10.6 Q11.6 2.2 11.6 3.2 V9 Q11.6 9.8 10.8 9.8 H1.3 Q0.5 9.8 0.5 9Z" fill="#e8b93c"/><path d="M0.5 4 H11.6 V9 Q11.6 9.8 10.8 9.8 H1.3 Q0.5 9.8 0.5 9Z" fill="#fbe08a"/><path d="M0.5 8.2 H11.6 V9 Q11.6 9.8 10.8 9.8 H1.3 Q0.5 9.8 0.5 9Z" fill="#efc044"/></svg><div class="t" style="left:87.20px;top:554.73px;font-size:10.6px;color:#e0e0e0;transform:scaleX(0.8427);transform-origin:0 0;">Пластины</div><svg style="left:59.5px;top:570.1px" width="5" height="7" viewBox="0 0 5 7"><path d="M0.8 0.5 L4 3.5 L0.8 6.5" stroke="#8c8c8c" stroke-width="1" fill="none"/></svg><div class="a" style="left:67.7px;top:574px;width:4.0px;height:1px;background:repeating-linear-gradient(90deg,#9a9a9a 0 1px,transparent 1px 2px)"></div><svg style="left:71.7px;top:568.4px" width="12" height="10" viewBox="0 0 12 10"><path d="M0.5 2 Q0.5 0.8 1.6 0.8 H4.6 L5.8 2.2 H10.6 Q11.6 2.2 11.6 3.2 V9 Q11.6 9.8 10.8 9.8 H1.3 Q0.5 9.8 0.5 9Z" fill="#e8b93c"/><path d="M0.5 4 H11.6 V9 Q11.6 9.8 10.8 9.8 H1.3 Q0.5 9.8 0.5 9Z" fill="#fbe08a"/><path d="M0.5 8.2 H11.6 V9 Q11.6 9.8 10.8 9.8 H1.3 Q0.5 9.8 0.5 9Z" fill="#efc044"/></svg><div class="t" style="left:87.20px;top:567.73px;font-size:10.6px;color:#e0e0e0;transform:scaleX(0.8280);transform-origin:0 0;">Профили гнутые</div><svg style="left:59.5px;top:583.1px" width="5" height="7" viewBox="0 0 5 7"><path d="M0.8 0.5 L4 3.5 L0.8 6.5" stroke="#8c8c8c" stroke-width="1" fill="none"/></svg><div class="a" style="left:67.7px;top:587px;width:4.0px;height:1px;background:repeating-linear-gradient(90deg,#9a9a9a 0 1px,transparent 1px 2px)"></div><svg style="left:71.7px;top:581.4px" width="12" height="10" viewBox="0 0 12 10"><path d="M0.5 2 Q0.5 0.8 1.6 0.8 H4.6 L5.8 2.2 H10.6 Q11.6 2.2 11.6 3.2 V9 Q11.6 9.8 10.8 9.8 H1.3 Q0.5 9.8 0.5 9Z" fill="#e8b93c"/><path d="M0.5 4 H11.6 V9 Q11.6 9.8 10.8 9.8 H1.3 Q0.5 9.8 0.5 9Z" fill="#fbe08a"/><path d="M0.5 8.2 H11.6 V9 Q11.6 9.8 10.8 9.8 H1.3 Q0.5 9.8 0.5 9Z" fill="#efc044"/></svg><div class="t" style="left:87.20px;top:580.73px;font-size:10.6px;color:#e0e0e0;transform:scaleX(0.8351);transform-origin:0 0;">Профили стальные гнутые Z-образного сечения</div><svg style="left:59.5px;top:596.1px" width="5" height="7" viewBox="0 0 5 7"><path d="M0.8 0.5 L4 3.5 L0.8 6.5" stroke="#8c8c8c" stroke-width="1" fill="none"/></svg><div class="a" style="left:67.7px;top:600px;width:4.0px;height:1px;background:repeating-linear-gradient(90deg,#9a9a9a 0 1px,transparent 1px 2px)"></div><svg style="left:71.7px;top:594.4px" width="12" height="10" viewBox="0 0 12 10"><path d="M0.5 2 Q0.5 0.8 1.6 0.8 H4.6 L5.8 2.2 H10.6 Q11.6 2.2 11.6 3.2 V9 Q11.6 9.8 10.8 9.8 H1.3 Q0.5 9.8 0.5 9Z" fill="#e8b93c"/><path d="M0.5 4 H11.6 V9 Q11.6 9.8 10.8 9.8 H1.3 Q0.5 9.8 0.5 9Z" fill="#fbe08a"/><path d="M0.5 8.2 H11.6 V9 Q11.6 9.8 10.8 9.8 H1.3 Q0.5 9.8 0.5 9Z" fill="#efc044"/></svg><div class="t" style="left:87.20px;top:593.73px;font-size:10.6px;color:#e0e0e0;transform:scaleX(0.8675);transform-origin:0 0;">Рельсы</div><svg style="left:59.5px;top:609.1px" width="5" height="7" viewBox="0 0 5 7"><path d="M0.8 0.5 L4 3.5 L0.8 6.5" stroke="#8c8c8c" stroke-width="1" fill="none"/></svg><div class="a" style="left:67.7px;top:613px;width:4.0px;height:1px;background:repeating-linear-gradient(90deg,#9a9a9a 0 1px,transparent 1px 2px)"></div><svg style="left:71.7px;top:607.4px" width="12" height="10" viewBox="0 0 12 10"><path d="M0.5 2 Q0.5 0.8 1.6 0.8 H4.6 L5.8 2.2 H10.6 Q11.6 2.2 11.6 3.2 V9 Q11.6 9.8 10.8 9.8 H1.3 Q0.5 9.8 0.5 9Z" fill="#e8b93c"/><path d="M0.5 4 H11.6 V9 Q11.6 9.8 10.8 9.8 H1.3 Q0.5 9.8 0.5 9Z" fill="#fbe08a"/><path d="M0.5 8.2 H11.6 V9 Q11.6 9.8 10.8 9.8 H1.3 Q0.5 9.8 0.5 9Z" fill="#efc044"/></svg><div class="t" style="left:87.20px;top:606.73px;font-size:10.6px;color:#e0e0e0;transform:scaleX(0.8419);transform-origin:0 0;">Трубы</div><svg style="left:59.5px;top:622.1px" width="5" height="7" viewBox="0 0 5 7"><path d="M0.8 0.5 L4 3.5 L0.8 6.5" stroke="#8c8c8c" stroke-width="1" fill="none"/></svg><div class="a" style="left:67.7px;top:626px;width:4.0px;height:1px;background:repeating-linear-gradient(90deg,#9a9a9a 0 1px,transparent 1px 2px)"></div><svg style="left:71.7px;top:620.4px" width="12" height="10" viewBox="0 0 12 10"><path d="M0.5 2 Q0.5 0.8 1.6 0.8 H4.6 L5.8 2.2 H10.6 Q11.6 2.2 11.6 3.2 V9 Q11.6 9.8 10.8 9.8 H1.3 Q0.5 9.8 0.5 9Z" fill="#e8b93c"/><path d="M0.5 4 H11.6 V9 Q11.6 9.8 10.8 9.8 H1.3 Q0.5 9.8 0.5 9Z" fill="#fbe08a"/><path d="M0.5 8.2 H11.6 V9 Q11.6 9.8 10.8 9.8 H1.3 Q0.5 9.8 0.5 9Z" fill="#efc044"/></svg><div class="t" style="left:87.20px;top:619.73px;font-size:10.6px;color:#e0e0e0;transform:scaleX(0.9289);transform-origin:0 0;">Уголки</div><svg style="left:59.5px;top:635.1px" width="5" height="7" viewBox="0 0 5 7"><path d="M0.8 0.5 L4 3.5 L0.8 6.5" stroke="#8c8c8c" stroke-width="1" fill="none"/></svg><div class="a" style="left:67.7px;top:639px;width:4.0px;height:1px;background:repeating-linear-gradient(90deg,#9a9a9a 0 1px,transparent 1px 2px)"></div><svg style="left:71.7px;top:633.4px" width="12" height="10" viewBox="0 0 12 10"><path d="M0.5 2 Q0.5 0.8 1.6 0.8 H4.6 L5.8 2.2 H10.6 Q11.6 2.2 11.6 3.2 V9 Q11.6 9.8 10.8 9.8 H1.3 Q0.5 9.8 0.5 9Z" fill="#e8b93c"/><path d="M0.5 4 H11.6 V9 Q11.6 9.8 10.8 9.8 H1.3 Q0.5 9.8 0.5 9Z" fill="#fbe08a"/><path d="M0.5 8.2 H11.6 V9 Q11.6 9.8 10.8 9.8 H1.3 Q0.5 9.8 0.5 9Z" fill="#efc044"/></svg><div class="t" style="left:87.20px;top:632.73px;font-size:10.6px;color:#e0e0e0;transform:scaleX(0.8145);transform-origin:0 0;">Швеллеры</div><svg style="left:13.0px;top:648.1px" width="5" height="7" viewBox="0 0 5 7"><path d="M0.8 0.5 L4 3.5 L0.8 6.5" stroke="#8c8c8c" stroke-width="1" fill="none"/></svg><div class="a" style="left:21.2px;top:652px;width:4.0px;height:1px;background:repeating-linear-gradient(90deg,#9a9a9a 0 1px,transparent 1px 2px)"></div><svg style="left:25.2px;top:646.4px" width="12" height="10" viewBox="0 0 12 10"><path d="M0.5 2 Q0.5 0.8 1.6 0.8 H4.6 L5.8 2.2 H10.6 Q11.6 2.2 11.6 3.2 V9 Q11.6 9.8 10.8 9.8 H1.3 Q0.5 9.8 0.5 9Z" fill="#e8b93c"/><path d="M0.5 4 H11.6 V9 Q11.6 9.8 10.8 9.8 H1.3 Q0.5 9.8 0.5 9Z" fill="#fbe08a"/><path d="M0.5 8.2 H11.6 V9 Q11.6 9.8 10.8 9.8 H1.3 Q0.5 9.8 0.5 9Z" fill="#efc044"/></svg><div class="t" style="left:40.70px;top:645.73px;font-size:10.6px;color:#e0e0e0;transform:scaleX(0.8629);transform-origin:0 0;">Плитка</div><svg style="left:13.0px;top:661.1px" width="5" height="7" viewBox="0 0 5 7"><path d="M0.8 0.5 L4 3.5 L0.8 6.5" stroke="#8c8c8c" stroke-width="1" fill="none"/></svg><div class="a" style="left:21.2px;top:665px;width:4.0px;height:1px;background:repeating-linear-gradient(90deg,#9a9a9a 0 1px,transparent 1px 2px)"></div><svg style="left:25.2px;top:659.4px" width="12" height="10" viewBox="0 0 12 10"><path d="M0.5 2 Q0.5 0.8 1.6 0.8 H4.6 L5.8 2.2 H10.6 Q11.6 2.2 11.6 3.2 V9 Q11.6 9.8 10.8 9.8 H1.3 Q0.5 9.8 0.5 9Z" fill="#e8b93c"/><path d="M0.5 4 H11.6 V9 Q11.6 9.8 10.8 9.8 H1.3 Q0.5 9.8 0.5 9Z" fill="#fbe08a"/><path d="M0.5 8.2 H11.6 V9 Q11.6 9.8 10.8 9.8 H1.3 Q0.5 9.8 0.5 9Z" fill="#efc044"/></svg><div class="t" style="left:40.70px;top:658.73px;font-size:10.6px;color:#e0e0e0;transform:scaleX(0.8593);transform-origin:0 0;">Покрытия</div><svg style="left:13.0px;top:674.1px" width="5" height="7" viewBox="0 0 5 7"><path d="M0.8 0.5 L4 3.5 L0.8 6.5" stroke="#8c8c8c" stroke-width="1" fill="none"/></svg><div class="a" style="left:21.2px;top:678px;width:4.0px;height:1px;background:repeating-linear-gradient(90deg,#9a9a9a 0 1px,transparent 1px 2px)"></div><svg style="left:25.2px;top:672.4px" width="12" height="10" viewBox="0 0 12 10"><path d="M0.5 2 Q0.5 0.8 1.6 0.8 H4.6 L5.8 2.2 H10.6 Q11.6 2.2 11.6 3.2 V9 Q11.6 9.8 10.8 9.8 H1.3 Q0.5 9.8 0.5 9Z" fill="#e8b93c"/><path d="M0.5 4 H11.6 V9 Q11.6 9.8 10.8 9.8 H1.3 Q0.5 9.8 0.5 9Z" fill="#fbe08a"/><path d="M0.5 8.2 H11.6 V9 Q11.6 9.8 10.8 9.8 H1.3 Q0.5 9.8 0.5 9Z" fill="#efc044"/></svg><div class="t" style="left:40.70px;top:671.73px;font-size:10.6px;color:#e0e0e0;transform:scaleX(0.8714);transform-origin:0 0;">Пользовательские</div><svg style="left:13.0px;top:687.1px" width="5" height="7" viewBox="0 0 5 7"><path d="M0.8 0.5 L4 3.5 L0.8 6.5" stroke="#8c8c8c" stroke-width="1" fill="none"/></svg><div class="a" style="left:21.2px;top:691px;width:4.0px;height:1px;background:repeating-linear-gradient(90deg,#9a9a9a 0 1px,transparent 1px 2px)"></div><svg style="left:25.2px;top:685.4px" width="12" height="10" viewBox="0 0 12 10"><path d="M0.5 2 Q0.5 0.8 1.6 0.8 H4.6 L5.8 2.2 H10.6 Q11.6 2.2 11.6 3.2 V9 Q11.6 9.8 10.8 9.8 H1.3 Q0.5 9.8 0.5 9Z" fill="#e8b93c"/><path d="M0.5 4 H11.6 V9 Q11.6 9.8 10.8 9.8 H1.3 Q0.5 9.8 0.5 9Z" fill="#fbe08a"/><path d="M0.5 8.2 H11.6 V9 Q11.6 9.8 10.8 9.8 H1.3 Q0.5 9.8 0.5 9Z" fill="#efc044"/></svg><div class="t" style="left:40.70px;top:684.73px;font-size:10.6px;color:#e0e0e0;transform:scaleX(0.8562);transform-origin:0 0;">Примеры</div><svg style="left:13.0px;top:700.1px" width="5" height="7" viewBox="0 0 5 7"><path d="M0.8 0.5 L4 3.5 L0.8 6.5" stroke="#8c8c8c" stroke-width="1" fill="none"/></svg><div class="a" style="left:21.2px;top:704px;width:4.0px;height:1px;background:repeating-linear-gradient(90deg,#9a9a9a 0 1px,transparent 1px 2px)"></div><svg style="left:25.2px;top:698.4px" width="12" height="10" viewBox="0 0 12 10"><path d="M0.5 2 Q0.5 0.8 1.6 0.8 H4.6 L5.8 2.2 H10.6 Q11.6 2.2 11.6 3.2 V9 Q11.6 9.8 10.8 9.8 H1.3 Q0.5 9.8 0.5 9Z" fill="#e8b93c"/><path d="M0.5 4 H11.6 V9 Q11.6 9.8 10.8 9.8 H1.3 Q0.5 9.8 0.5 9Z" fill="#fbe08a"/><path d="M0.5 8.2 H11.6 V9 Q11.6 9.8 10.8 9.8 H1.3 Q0.5 9.8 0.5 9Z" fill="#efc044"/></svg><div class="t" style="left:40.70px;top:697.73px;font-size:10.6px;color:#e0e0e0;transform:scaleX(0.8564);transform-origin:0 0;">Расчеты</div><svg style="left:13.0px;top:713.1px" width="5" height="7" viewBox="0 0 5 7"><path d="M0.8 0.5 L4 3.5 L0.8 6.5" stroke="#8c8c8c" stroke-width="1" fill="none"/></svg><div class="a" style="left:21.2px;top:717px;width:4.0px;height:1px;background:repeating-linear-gradient(90deg,#9a9a9a 0 1px,transparent 1px 2px)"></div><svg style="left:25.2px;top:711.4px" width="12" height="10" viewBox="0 0 12 10"><path d="M0.5 2 Q0.5 0.8 1.6 0.8 H4.6 L5.8 2.2 H10.6 Q11.6 2.2 11.6 3.2 V9 Q11.6 9.8 10.8 9.8 H1.3 Q0.5 9.8 0.5 9Z" fill="#e8b93c"/><path d="M0.5 4 H11.6 V9 Q11.6 9.8 10.8 9.8 H1.3 Q0.5 9.8 0.5 9Z" fill="#fbe08a"/><path d="M0.5 8.2 H11.6 V9 Q11.6 9.8 10.8 9.8 H1.3 Q0.5 9.8 0.5 9Z" fill="#efc044"/></svg><div class="t" style="left:40.70px;top:710.73px;font-size:10.6px;color:#e0e0e0;transform:scaleX(0.8332);transform-origin:0 0;">Сварные соединения</div><svg style="left:13.0px;top:726.1px" width="5" height="7" viewBox="0 0 5 7"><path d="M0.8 0.5 L4 3.5 L0.8 6.5" stroke="#8c8c8c" stroke-width="1" fill="none"/></svg><div class="a" style="left:21.2px;top:730px;width:4.0px;height:1px;background:repeating-linear-gradient(90deg,#9a9a9a 0 1px,transparent 1px 2px)"></div><svg style="left:25.2px;top:724.4px" width="12" height="10" viewBox="0 0 12 10"><path d="M0.5 2 Q0.5 0.8 1.6 0.8 H4.6 L5.8 2.2 H10.6 Q11.6 2.2 11.6 3.2 V9 Q11.6 9.8 10.8 9.8 H1.3 Q0.5 9.8 0.5 9Z" fill="#e8b93c"/><path d="M0.5 4 H11.6 V9 Q11.6 9.8 10.8 9.8 H1.3 Q0.5 9.8 0.5 9Z" fill="#fbe08a"/><path d="M0.5 8.2 H11.6 V9 Q11.6 9.8 10.8 9.8 H1.3 Q0.5 9.8 0.5 9Z" fill="#efc044"/></svg><div class="t" style="left:40.70px;top:723.73px;font-size:10.6px;color:#e0e0e0;transform:scaleX(0.8502);transform-origin:0 0;">Таблицы</div><svg style="left:13.0px;top:739.1px" width="5" height="7" viewBox="0 0 5 7"><path d="M0.8 0.5 L4 3.5 L0.8 6.5" stroke="#8c8c8c" stroke-width="1" fill="none"/></svg><div class="a" style="left:21.2px;top:743px;width:4.0px;height:1px;background:repeating-linear-gradient(90deg,#9a9a9a 0 1px,transparent 1px 2px)"></div><svg style="left:25.2px;top:737.4px" width="12" height="10" viewBox="0 0 12 10"><path d="M0.5 2 Q0.5 0.8 1.6 0.8 H4.6 L5.8 2.2 H10.6 Q11.6 2.2 11.6 3.2 V9 Q11.6 9.8 10.8 9.8 H1.3 Q0.5 9.8 0.5 9Z" fill="#e8b93c"/><path d="M0.5 4 H11.6 V9 Q11.6 9.8 10.8 9.8 H1.3 Q0.5 9.8 0.5 9Z" fill="#fbe08a"/><path d="M0.5 8.2 H11.6 V9 Q11.6 9.8 10.8 9.8 H1.3 Q0.5 9.8 0.5 9Z" fill="#efc044"/></svg><div class="t" style="left:40.70px;top:736.73px;font-size:10.6px;color:#e0e0e0;transform:scaleX(0.8893);transform-origin:0 0;">Тектоника</div><svg style="left:13.0px;top:752.1px" width="5" height="7" viewBox="0 0 5 7"><path d="M0.8 0.5 L4 3.5 L0.8 6.5" stroke="#8c8c8c" stroke-width="1" fill="none"/></svg><div class="a" style="left:21.2px;top:756px;width:4.0px;height:1px;background:repeating-linear-gradient(90deg,#9a9a9a 0 1px,transparent 1px 2px)"></div><svg style="left:25.2px;top:750.4px" width="12" height="10" viewBox="0 0 12 10"><path d="M0.5 2 Q0.5 0.8 1.6 0.8 H4.6 L5.8 2.2 H10.6 Q11.6 2.2 11.6 3.2 V9 Q11.6 9.8 10.8 9.8 H1.3 Q0.5 9.8 0.5 9Z" fill="#e8b93c"/><path d="M0.5 4 H11.6 V9 Q11.6 9.8 10.8 9.8 H1.3 Q0.5 9.8 0.5 9Z" fill="#fbe08a"/><path d="M0.5 8.2 H11.6 V9 Q11.6 9.8 10.8 9.8 H1.3 Q0.5 9.8 0.5 9Z" fill="#efc044"/></svg><div class="t" style="left:40.70px;top:749.73px;font-size:10.6px;color:#e0e0e0;transform:scaleX(0.8593);transform-origin:0 0;">Технология производства</div></div>
<div class="a" style="left:0px;top:775.2px;width:285px;height:22px;background:#4f4f4f;"></div>
<div class="a" style="left:3.8px;top:776.2px;width:38.900000000000006px;height:17.4px;background:#585858;border:1px solid #6a6a6a;"></div>
<div class="t" style="left:9.11px;top:781.63px;font-size:9.3px;color:#bebebe;letter-spacing:-0.182px;">Альб...</div>
<div class="a" style="left:44.2px;top:776.2px;width:38.8px;height:17.4px;background:#585858;border:1px solid #6a6a6a;"></div>
<div class="t" style="left:48.77px;top:781.63px;font-size:9.3px;color:#bebebe;letter-spacing:-0.190px;">Объе...</div>
<div class="a" style="left:84.6px;top:776.2px;width:38.400000000000006px;height:17.4px;background:#585858;border:1px solid #6a6a6a;"></div>
<div class="t" style="left:88.93px;top:781.63px;font-size:9.3px;color:#bebebe;letter-spacing:-0.191px;">Мене...</div>
<div class="a" style="left:124px;top:776.2px;width:41.80000000000001px;height:17.4px;background:#787878;"></div>
<div class="t" style="left:127.82px;top:781.63px;font-size:9.3px;color:#f4f4f4;letter-spacing:-0.171px;">База э...</div>
<div class="a" style="left:166.3px;top:776.2px;width:25.0px;height:17.4px;background:#585858;border:1px solid #6a6a6a;"></div>
<div class="t" style="left:169.90px;top:781.63px;font-size:9.3px;color:#bebebe;letter-spacing:-0.267px;">BCF</div>
<div class="a" style="left:192.9px;top:776.2px;width:38.400000000000006px;height:17.4px;background:#585858;border:1px solid #6a6a6a;"></div>
<div class="t" style="left:197.92px;top:781.63px;font-size:9.3px;color:#bebebe;letter-spacing:-0.182px;">Обоз...</div>
<div class="a" style="left:232.7px;top:776.2px;width:40.0px;height:17.4px;background:#585858;border:1px solid #6a6a6a;"></div>
<div class="t" style="left:236.28px;top:781.63px;font-size:9.3px;color:#bebebe;letter-spacing:-0.185px;">Свойс...</div>
<!-- canvas -->
<div class="a" style="left:285px;top:124px;width:1273px;height:19px;background:#4c4c4c;"></div>
<div class="a" style="left:285px;top:124px;width:1px;height:673px;background:#6a6a6a;"></div>
<div class="a" style="left:286px;top:127px;width:94.5px;height:14px;background:#707070;"></div>
<div class="t" style="left:302.50px;top:129.24px;font-size:9.4px;color:#f0f0f0;letter-spacing:-0.035px;">Без имени0*</div>
<svg style="left:369px;top:130.5px" width="7" height="7" viewBox="0 0 7 7"><path d="M0.5 0.5 L6.5 6.5 M6.5 0.5 L0.5 6.5" stroke="#f0f0f0" stroke-width="1.1"/></svg>
<div class="a" style="left:286px;top:140.6px;width:1271px;height:1.5px;background:#6a6a6a;"></div>
<div class="a" style="left:1546.1px;top:131.9px;width:0;height:0;border:3.2px solid transparent;border-top:3.7px solid #f0f0f0;border-bottom:0"></div>
<div class="a" style="left:287.2px;top:142.2px;width:1269.8px;height:633.4px;background:#2b2b2b;"></div>
<div class="a" style="left:286px;top:142px;width:1.2px;height:634px;background:#585858;"></div>
<div class="a" style="left:292.7px;top:146.3px;width:20.30000000000001px;height:12.6px;background:#484848;border-radius:6.3px"></div>
<div class="t" style="left:299.81px;top:148.10px;font-size:10.4px;color:#8c8c8c;">+</div>
<div class="a" style="left:316px;top:146.3px;width:44.30000000000001px;height:12.6px;background:#484848;border-radius:6.3px"></div>
<div class="t" style="left:324.15px;top:148.10px;font-size:10.4px;color:#8c8c8c;transform:scaleX(0.8053);transform-origin:0 0;">Сверху</div>
<div class="a" style="left:363.4px;top:146.3px;width:58.10000000000002px;height:12.6px;background:#484848;border-radius:6.3px"></div>
<div class="t" style="left:371.45px;top:148.10px;font-size:10.4px;color:#8c8c8c;transform:scaleX(0.8595);transform-origin:0 0;">2D-каркас</div>
<div class="a" style="left:424.6px;top:146.3px;width:122.89999999999998px;height:12.6px;background:#484848;border-radius:6.3px"></div>
<div class="t" style="left:433.05px;top:148.10px;font-size:10.4px;color:#8c8c8c;transform:scaleX(0.8283);transform-origin:0 0;">— нет связанных видов —</div>
<svg style="left:0;top:0" width="1560" height="877" viewBox="0 0 1560 877"><path d="M375.5 232.5 H770 V255 H608.8 A28.5 28.5 0 0 0 580.3 283.5 V569.5 A28.5 28.5 0 0 0 608.8 598 H770 V620.5 H375.5 V598 H536.8 A28.5 28.5 0 0 0 565.3 569.5 V283.5 A28.5 28.5 0 0 0 536.8 255 H375.5Z" fill="none" stroke="#f4f4f4" stroke-width="1.7"/><path d="M572.8 219 V633 M551.5 426.4 H594" stroke="#e8e8e8" stroke-width="1"/><path d="M307.2 577.5 V655.5 M287 616.5 H346" stroke="#bdbdbd" stroke-width="0.9"/><rect x="317" y="728" width="18.2" height="18" fill="none" stroke="#e8e8e8" stroke-width="1.1"/><path d="M326.1 728 V668.5 M326.1 645.5 L320 668.5 H332.4Z M326.1 650 V668" stroke="#e8e8e8" stroke-width="1.1" fill="none"/><path d="M335.2 736.8 H393.5 M415.8 736.8 L393.5 730.3 V743.3Z M411 736.8 H393.5" stroke="#e8e8e8" stroke-width="1.1" fill="none"/><path d="M321.6 623 L326 628 L330.4 623 M326 628 V633.4" stroke="#d8d8d8" stroke-width="1.1" fill="none"/><path d="M429.5 731.2 L440 742.2 M440 731.2 L429.5 742.2" stroke="#d8d8d8" stroke-width="1.1" fill="none"/><circle cx="1478.2" cy="221.2" r="65" fill="none" stroke="#636363" stroke-width="0.9"/><circle cx="1478.2" cy="221.2" r="43" fill="none" stroke="#636363" stroke-width="0.9"/><path d="M1478.2 156 V286 M1413 221.2 H1543.2" stroke="#636363" stroke-width="0.9"/><circle cx="1479" cy="221.2" r="2.6" fill="#8a6a4a"/></svg>
<div class="a" style="left:1462px;top:288.8px;width:36.5px;height:11.6px;background:#454545;border-radius:5.8px"></div>
<div class="t" style="left:1482.00px;top:290.18px;font-size:9px;color:#6e6e6e;letter-spacing:-0.335px;">oxy</div>
<div class="a" style="left:1556.8px;top:124px;width:1.4px;height:733px;background:#6a6a6a;"></div>
<div class="a" style="left:286px;top:775.6px;width:1271px;height:1.5px;background:#6a6a6a;"></div>
<div class="a" style="left:286px;top:777px;width:1271px;height:17.5px;background:#4c4c4c;"></div>
<div class="a" style="left:286px;top:794px;width:1271px;height:1.5px;background:#6e6e6e;"></div>
<svg style="left:287.8px;top:779px" width="14" height="12" viewBox="0 0 14 12"><rect x="0.6" y="0.6" width="12.4" height="10.8" fill="#2e2e2e" stroke="#dcdcdc" stroke-width="1.1"/><rect x="1.2" y="4.4" width="11.2" height="2.6" fill="#6fa8e8"/><path d="M1 3.8 H13 M1 7.6 H13" stroke="#dcdcdc" stroke-width="0.9"/></svg>
<div class="a" style="left:316px;top:777px;width:45px;height:15.5px;background:#7c7c7c;"></div>
<div class="t" style="left:322.00px;top:780.13px;font-size:9.3px;color:#f6f6f6;letter-spacing:-0.064px;">Модель</div>
<div class="a" style="left:363px;top:777px;width:21px;height:15.5px;background:#5a5a5a;border:1px solid #6c6c6c"></div>
<div class="t" style="left:368.25px;top:780.38px;font-size:9px;color:#cfcfcf;letter-spacing:-0.254px;">A4</div>
<div class="a" style="left:385.5px;top:777px;width:20.5px;height:15.5px;background:#5a5a5a;border:1px solid #6c6c6c"></div>
<div class="t" style="left:390.50px;top:780.38px;font-size:9px;color:#cfcfcf;letter-spacing:-0.254px;">A3</div>
<div class="a" style="left:407.5px;top:777px;width:20.5px;height:15.5px;background:#5a5a5a;border:1px solid #6c6c6c"></div>
<div class="t" style="left:412.50px;top:780.38px;font-size:9px;color:#cfcfcf;letter-spacing:-0.254px;">A2</div>
<div class="a" style="left:429.5px;top:777px;width:20.5px;height:15.5px;background:#5a5a5a;border:1px solid #6c6c6c"></div>
<div class="t" style="left:434.50px;top:780.38px;font-size:9px;color:#cfcfcf;letter-spacing:-0.254px;">A1</div>
<!-- dialog -->
<div class="a" style="left:794.5px;top:168.3px;width:684.0px;height:588.8px;background:#f0f0f0;border-radius:6px;box-shadow:0 3px 10px rgba(0,0,0,0.65),0 0 0 0.6px #888;overflow:hidden"></div>
<svg style="left:802px;top:174px" width="12" height="12" viewBox="0 0 12 12"><path d="M1.5 0.5 H10 Q11.5 0.5 11.5 2 V8 Q11.5 11.5 8 11.5 H0.5 V1.5 Q0.5 0.5 1.5 0.5Z" fill="#3a9cc8"/><path d="M3 3.2 Q3 2.4 4 2.4 H8 Q10 2.4 10 4.4 V6 Q10 7.4 8.6 7.4 H5 L3 8.8Z" fill="#e4f2f9"/><path d="M4.6 6 Q6.4 4 8.4 6" stroke="#3a9cc8" fill="none" stroke-width="0.9"/></svg>
<div class="t" style="left:818.70px;top:175.22px;font-size:9.9px;color:#1c1c1c;letter-spacing:-0.192px;">Мастер объектов - [ГОСТ Р 57837-2017]</div>
<svg style="left:1380px;top:174px" width="90" height="12" viewBox="0 0 90 12"><path d="M2 5.6 H10" stroke="#c4c4c4" stroke-width="0.9"/><rect x="38.6" y="1.2" width="8.2" height="8.2" rx="1.2" fill="none" stroke="#2a2a2a" stroke-width="1"/><path d="M75.6 1 L84.4 9.8 M84.4 1 L75.6 9.8" stroke="#2a2a2a" stroke-width="1"/></svg>
<div class="a" style="left:794.5px;top:191.8px;width:684.0px;height:15.8px;background:#ffffff;"></div>
<div class="t" style="left:800.70px;top:195.59px;font-size:9.7px;color:#1a1a1a;letter-spacing:-0.122px;">Объект</div>
<div class="t" style="left:844.20px;top:195.59px;font-size:9.7px;color:#1a1a1a;letter-spacing:-0.107px;">Редактирование</div>
<div class="t" style="left:927.80px;top:195.59px;font-size:9.7px;color:#1a1a1a;letter-spacing:0.140px;">Скрипт</div>
<div class="t" style="left:971.70px;top:195.59px;font-size:9.7px;color:#1a1a1a;letter-spacing:-0.110px;">Мастер</div>
<div class="t" style="left:1016.10px;top:195.59px;font-size:9.7px;color:#1a1a1a;letter-spacing:0.389px;">Помощь</div>
<div class="a" style="left:802px;top:208.3px;width:668px;height:1.6px;background:#c6c6c6;"></div>
<div class="a" style="left:802px;top:232.8px;width:668px;height:1.4px;background:#bdbdbd;"></div>
<svg style="left:804px;top:215.5px" width="13" height="12" viewBox="0 0 13 12"><path d="M0.5 2.5 H4.5 L5.5 3.6 H12 V11 H0.5Z" fill="#e8b830"/><path d="M0.5 5 H12 V11 H0.5Z" fill="#f8dc70"/><path d="M9.5 0 V5 M7 2.5 H12 M7.8 0.8 L11.2 4.2 M11.2 0.8 L7.8 4.2" stroke="#e8a020" stroke-width="0.9"/><path d="M3.5 7 H7 M5.2 5.6 V8.6" stroke="#a07010" stroke-width="0.8"/></svg>
<svg style="left:823.5px;top:216px" width="13" height="11" viewBox="0 0 13 11"><path d="M0.5 1.5 H4.5 L5.5 2.6 H10.5 V4 H3 L0.5 10Z" fill="#d8a020" stroke="#a87810" stroke-width="0.6"/><path d="M3 4 H12.5 L10 10 H0.5Z" fill="#f8dc70" stroke="#a87810" stroke-width="0.6"/></svg>
<svg style="left:842.5px;top:215.5px" width="12" height="12" viewBox="0 0 12 12"><path d="M0.5 0.5 H10.5 L11.5 1.5 V11.5 H0.5Z" fill="#62620e"/><rect x="2.4" y="1" width="7" height="4.2" fill="#c4d8e6"/><rect x="2.4" y="7.2" width="7.2" height="4.3" fill="#161616"/><rect x="6.8" y="8" width="1.8" height="2.8" fill="#e8e8e8"/></svg>
<div class="a" style="left:860px;top:214px;width:1px;height:16px;background:#c4c4c4;"></div>
<svg style="left:867.5px;top:217.5px" width="11" height="8" viewBox="0 0 11 8"><path d="M3.4 0.8 L0.8 3.4 L3.4 6 M0.8 3.4 H7 Q10 3.4 10 5.4 Q10 7.2 7.6 7.2" stroke="#a4a4a4" stroke-width="1.6" fill="none"/></svg>
<svg style="left:887px;top:217.5px" width="11" height="8" viewBox="0 0 11 8"><path d="M7.6 0.8 L10.2 3.4 L7.6 6 M10.2 3.4 H4 Q1 3.4 1 5.4 Q1 7.2 3.4 7.2" stroke="#a4a4a4" stroke-width="1.6" fill="none"/></svg>
<div class="a" style="left:802.3px;top:241.5px;width:250.3px;height:489px;background:#fff;border:1px solid #828282;border-right-color:#a8a8a8;border-bottom-color:#a8a8a8;box-shadow:inset 1px 1px 0 #a0a0a0"></div>
<div class="a" style="left:829px;top:256px;width:1px;height:371.17999999999995px;background:repeating-linear-gradient(#9c9c9c 0 1px,transparent 1px 2px)"></div>
<div class="a" style="left:844.5px;top:282px;width:1px;height:28.69999999999999px;background:repeating-linear-gradient(#9c9c9c 0 1px,transparent 1px 2px)"></div>
<div class="a" style="left:844.5px;top:347px;width:1px;height:215.08000000000004px;background:repeating-linear-gradient(#9c9c9c 0 1px,transparent 1px 2px)"></div>
<div class="a" style="left:860px;top:360px;width:1px;height:189.05999999999995px;background:repeating-linear-gradient(#9c9c9c 0 1px,transparent 1px 2px)"></div>
<div class="a" style="left:860px;top:322px;width:1px;height:3px;background:repeating-linear-gradient(#9c9c9c 0 1px,transparent 1px 2px)"></div>
<div class="a" style="left:844.5px;top:580.1px;width:1px;height:8.019999999999982px;background:repeating-linear-gradient(#9c9c9c 0 1px,transparent 1px 2px)"></div>
<div class="a" style="left:817.5px;top:250px;width:5.5px;height:1px;background:repeating-linear-gradient(90deg,#9c9c9c 0 1px,transparent 1px 2px)"></div>
<svg style="left:810px;top:246px" width="7" height="7" viewBox="0 0 7 7"><g shape-rendering="crispEdges"><rect x="0.5" y="0.5" width="6" height="6" fill="#fff" stroke="#9a9a9a" stroke-width="1"/><path d="M2 3.5 H5" stroke="#2a3a5a" stroke-width="1"/></g></svg>
<svg style="left:823px;top:243.6px" width="12" height="12" viewBox="0 0 12 12"><path d="M1 6 L4 4.5 H8 L10.8 6 V10 L8 11.5 H1Z" fill="#3f6fb0"/><path d="M1 6 H8 V11.5 H1Z" fill="#5a8ad0"/><path d="M2.5 2 L5 0.8 H8 L9.6 2 V5.6 L7.4 6.8 H2.5Z" fill="#b83838"/><path d="M2.5 2 H7.4 V6.8 H2.5Z" fill="#d86060"/></svg>
<div class="t" style="left:838.90px;top:244.89px;font-size:9.7px;color:#111;font-weight:bold;letter-spacing:0.241px;">Объект - ГОСТ Р 57837-2017</div>
<div class="a" style="left:829px;top:263px;width:9px;height:1px;background:repeating-linear-gradient(90deg,#9c9c9c 0 1px,transparent 1px 2px)"></div>
<svg style="left:838px;top:256.62px" width="12" height="12" viewBox="0 0 12 12"><circle cx="1.6" cy="2.4" r="1.2" fill="#c05050"/><circle cx="1.6" cy="6" r="1.2" fill="#c05050"/><circle cx="1.6" cy="9.6" r="1.2" fill="#c05050"/><path d="M4 2.4 H11.5 M4 6 H11.5 M4 9.6 H11.5" stroke="#4a6f9a" stroke-width="1.5"/></svg>
<div class="t" style="left:854.30px;top:257.91px;font-size:9.7px;color:#111;font-weight:bold;letter-spacing:-0.099px;">Описание</div>
<div class="a" style="left:833px;top:276px;width:5px;height:1px;background:repeating-linear-gradient(90deg,#9c9c9c 0 1px,transparent 1px 2px)"></div>
<svg style="left:826px;top:272px" width="7" height="7" viewBox="0 0 7 7"><g shape-rendering="crispEdges"><rect x="0.5" y="0.5" width="6" height="6" fill="#fff" stroke="#9a9a9a" stroke-width="1"/><path d="M2 3.5 H5" stroke="#2a3a5a" stroke-width="1"/></g></svg>
<svg style="left:838px;top:269.64px" width="13" height="12" viewBox="0 0 13 12"><path d="M0.5 0.5 H7 L8.5 2 V10.5 H0.5Z" fill="#dfe9f6" stroke="#3a5f9a" stroke-width="1"/><path d="M2 3 H3 M4 3 H7 M2 5.2 H3 M4 5.2 H7 M2 7.4 H3 M4 7.4 H7" stroke="#3a5f9a" stroke-width="0.9"/><path d="M5 9 L7.5 11.5 L12.5 5.5" stroke="#c03030" stroke-width="1.5" fill="none"/></svg>
<div class="t" style="left:854.50px;top:270.93px;font-size:9.7px;color:#111;font-weight:bold;letter-spacing:0.046px;">Параметры</div>
<div class="a" style="left:848.5px;top:289px;width:5.5px;height:1px;background:repeating-linear-gradient(90deg,#9c9c9c 0 1px,transparent 1px 2px)"></div>
<svg style="left:841px;top:285px" width="7" height="7" viewBox="0 0 7 7"><g shape-rendering="crispEdges"><rect x="0.5" y="0.5" width="6" height="6" fill="#fff" stroke="#9a9a9a" stroke-width="1"/><path d="M2 3.5 H5" stroke="#2a3a5a" stroke-width="1"/><path d="M3.5 2 V5" stroke="#2a3a5a" stroke-width="1"/></g></svg>
<svg style="left:854px;top:282.65999999999997px" width="13" height="13" viewBox="0 0 13 13"><path d="M0.5 0.5 H7 L8.5 2 V10.5 H0.5Z" fill="#dfe9f6" stroke="#3a5f9a" stroke-width="1"/><path d="M2 3 H3 M4 3 H7 M2 5.2 H3 M4 5.2 H7 M2 7.4 H3 M4 7.4 H7" stroke="#3a5f9a" stroke-width="0.9"/><path d="M6.5 5 Q6.5 3.5 7.6 3.5 Q8.4 3.5 8.6 4.4 Q9 3 10 3.2 Q10.8 3.4 10.9 4.4 Q11.6 3.8 12.2 4.6 V9 Q12.2 12 9.5 12 Q7 12 6.5 9.5Z" fill="#e07878" stroke="#b84848" stroke-width="0.6"/></svg>
<div class="t" style="left:870.00px;top:283.95px;font-size:9.7px;color:#111;font-weight:bold;letter-spacing:-0.186px;">Открытые</div>
<div class="a" style="left:848.5px;top:302px;width:5.5px;height:1px;background:repeating-linear-gradient(90deg,#9c9c9c 0 1px,transparent 1px 2px)"></div>
<svg style="left:841px;top:298px" width="7" height="7" viewBox="0 0 7 7"><g shape-rendering="crispEdges"><rect x="0.5" y="0.5" width="6" height="6" fill="#fff" stroke="#9a9a9a" stroke-width="1"/><path d="M2 3.5 H5" stroke="#2a3a5a" stroke-width="1"/><path d="M3.5 2 V5" stroke="#2a3a5a" stroke-width="1"/></g></svg>
<svg style="left:854px;top:295.68px" width="13" height="13" viewBox="0 0 13 13"><path d="M0.5 0.5 H7 L8.5 2 V10.5 H0.5Z" fill="#dfe9f6" stroke="#3a5f9a" stroke-width="1"/><path d="M2 3 H3 M4 3 H7 M2 5.2 H3 M4 5.2 H7 M2 7.4 H3 M4 7.4 H7" stroke="#3a5f9a" stroke-width="0.9"/><rect x="6.5" y="7.5" width="6" height="5" rx="0.8" fill="#d85a5a"/><path d="M7.8 7.5 V6 Q7.8 4.4 9.5 4.4 Q11.2 4.4 11.2 6 V7.5" stroke="#c04a4a" stroke-width="1.1" fill="none"/></svg>
<div class="t" style="left:870.00px;top:296.97px;font-size:9.7px;color:#111;font-weight:bold;letter-spacing:-0.059px;">Защищенные</div>
<div class="a" style="left:848.5px;top:315px;width:5.5px;height:1px;background:repeating-linear-gradient(90deg,#9c9c9c 0 1px,transparent 1px 2px)"></div>
<svg style="left:841px;top:311px" width="7" height="7" viewBox="0 0 7 7"><g shape-rendering="crispEdges"><rect x="0.5" y="0.5" width="6" height="6" fill="#fff" stroke="#9a9a9a" stroke-width="1"/><path d="M2 3.5 H5" stroke="#2a3a5a" stroke-width="1"/></g></svg>
<svg style="left:854px;top:309.2px" width="13" height="11" viewBox="0 0 13 11"><rect x="0.5" y="0.5" width="12" height="10" fill="#eef3fa" stroke="#2f5f9e" stroke-width="1"/><rect x="1" y="1" width="11" height="2.2" fill="#c86060"/><path d="M0.5 3.6 H12.5 M0.5 6 H12.5 M0.5 8.4 H12.5" stroke="#2f5f9e" stroke-width="1.1"/><path d="M4.5 1 V10.5 M8.5 1 V10.5" stroke="#2f5f9e" stroke-width="0.9"/></svg>
<div class="t" style="left:870.90px;top:309.99px;font-size:9.7px;color:#111;font-weight:bold;letter-spacing:-0.280px;">Табличные</div>
<div class="a" style="left:864px;top:328px;width:4.600000000000023px;height:1px;background:repeating-linear-gradient(90deg,#9c9c9c 0 1px,transparent 1px 2px)"></div>
<svg style="left:856px;top:324px" width="7" height="7" viewBox="0 0 7 7"><g shape-rendering="crispEdges"><rect x="0.5" y="0.5" width="6" height="6" fill="#fff" stroke="#9a9a9a" stroke-width="1"/><path d="M2 3.5 H5" stroke="#2a3a5a" stroke-width="1"/><path d="M3.5 2 V5" stroke="#2a3a5a" stroke-width="1"/></g></svg>
<svg style="left:868.6px;top:322.22px" width="13" height="11" viewBox="0 0 13 11"><rect x="0.5" y="0.5" width="12" height="10" fill="#eef3fa" stroke="#5a7fc0" stroke-width="1"/><rect x="1" y="1" width="11" height="2.2" fill="#8a9ad8"/><path d="M0.5 3.6 H12.5 M0.5 6 H12.5 M0.5 8.4 H12.5" stroke="#4a6fb8" stroke-width="1.1"/><path d="M4.5 1 V10.5 M8.5 1 V10.5" stroke="#4a6fb8" stroke-width="0.9"/></svg>
<div class="t" style="left:885.70px;top:323.09px;font-size:9.6px;color:#111;letter-spacing:-0.315px;">Table0</div>
<div class="a" style="left:833px;top:341px;width:5px;height:1px;background:repeating-linear-gradient(90deg,#9c9c9c 0 1px,transparent 1px 2px)"></div>
<svg style="left:826px;top:337px" width="7" height="7" viewBox="0 0 7 7"><g shape-rendering="crispEdges"><rect x="0.5" y="0.5" width="6" height="6" fill="#fff" stroke="#9a9a9a" stroke-width="1"/><path d="M2 3.5 H5" stroke="#2a3a5a" stroke-width="1"/></g></svg>
<svg style="left:838px;top:334.74px" width="13" height="13" viewBox="0 0 13 13"><g transform="translate(0,1.5)"><path d="M0.5 0.5 H7 L8.5 2 V10.5 H0.5Z" fill="#dfe9f6" stroke="#3a5f9a" stroke-width="1"/><path d="M2 3 H3 M4 3 H7 M2 5.2 H3 M4 5.2 H7 M2 7.4 H3 M4 7.4 H7" stroke="#3a5f9a" stroke-width="0.9"/></g><path d="M11 0 L12 0 L12 4 L9 7Z" fill="#6a8ac8"/><circle cx="7.5" cy="7.5" r="2.2" fill="#c86060"/></svg>
<div class="t" style="left:855.20px;top:336.03px;font-size:9.7px;color:#111;font-weight:bold;letter-spacing:-0.185px;">Методы</div>
<div class="a" style="left:848.5px;top:354px;width:5.5px;height:1px;background:repeating-linear-gradient(90deg,#9c9c9c 0 1px,transparent 1px 2px)"></div>
<svg style="left:841px;top:350px" width="7" height="7" viewBox="0 0 7 7"><g shape-rendering="crispEdges"><rect x="0.5" y="0.5" width="6" height="6" fill="#fff" stroke="#9a9a9a" stroke-width="1"/><path d="M2 3.5 H5" stroke="#2a3a5a" stroke-width="1"/></g></svg>
<svg style="left:854px;top:347.76px" width="13" height="13" viewBox="0 0 13 13"><g transform="translate(0,2)"><path d="M0.5 0.5 H7 L8.5 2 V10.5 H0.5Z" fill="#dfe9f6" stroke="#3a5f9a" stroke-width="1"/><path d="M2 3 H3 M4 3 H7 M2 5.2 H3 M4 5.2 H7 M2 7.4 H3 M4 7.4 H7" stroke="#3a5f9a" stroke-width="0.9"/></g><circle cx="8.6" cy="3.8" r="3.7" fill="#d87070"/><circle cx="7.6" cy="2.8" r="1.4" fill="#eea8a8"/><path d="M7.4 7 H9.8 V9.4 H7.4Z" fill="#5a7ac0"/></svg>
<div class="t" style="left:870.00px;top:349.05px;font-size:9.7px;color:#111;font-weight:bold;letter-spacing:-0.135px;">Обработчики событий</div>
<div class="a" style="left:860px;top:367px;width:8.600000000000023px;height:1px;background:repeating-linear-gradient(90deg,#9c9c9c 0 1px,transparent 1px 2px)"></div>
<svg style="left:868.6px;top:360.78px" width="13" height="13" viewBox="0 0 13 13"><g transform="translate(0,2)"><path d="M0.5 0.5 H7 L8.5 2 V10.5 H0.5Z" fill="#dfe9f6" stroke="#3a5f9a" stroke-width="1"/><path d="M2 3 H3 M4 3 H7 M2 5.2 H3 M4 5.2 H7 M2 7.4 H3 M4 7.4 H7" stroke="#3a5f9a" stroke-width="0.9"/></g><circle cx="8.6" cy="3.8" r="3.7" fill="#d87070"/><circle cx="7.6" cy="2.8" r="1.4" fill="#eea8a8"/><path d="M7.4 7 H9.8 V9.4 H7.4Z" fill="#5a7ac0"/></svg>
<div class="t" style="left:885.40px;top:362.15px;font-size:9.6px;color:#111;letter-spacing:-0.417px;">ActHeader</div>
<div class="a" style="left:860px;top:380px;width:8.600000000000023px;height:1px;background:repeating-linear-gradient(90deg,#9c9c9c 0 1px,transparent 1px 2px)"></div>
<svg style="left:868.6px;top:373.79999999999995px" width="13" height="13" viewBox="0 0 13 13"><g transform="translate(0,2)"><path d="M0.5 0.5 H7 L8.5 2 V10.5 H0.5Z" fill="#dfe9f6" stroke="#3a5f9a" stroke-width="1"/><path d="M2 3 H3 M4 3 H7 M2 5.2 H3 M4 5.2 H7 M2 7.4 H3 M4 7.4 H7" stroke="#3a5f9a" stroke-width="0.9"/></g><circle cx="8.6" cy="3.8" r="3.7" fill="#d87070"/><circle cx="7.6" cy="2.8" r="1.4" fill="#eea8a8"/><path d="M7.4 7 H9.8 V9.4 H7.4Z" fill="#5a7ac0"/></svg>
<div class="t" style="left:884.80px;top:375.17px;font-size:9.6px;color:#111;letter-spacing:-0.467px;">OnInitialization</div>
<div class="a" style="left:860px;top:393px;width:8.600000000000023px;height:1px;background:repeating-linear-gradient(90deg,#9c9c9c 0 1px,transparent 1px 2px)"></div>
<svg style="left:868.6px;top:386.82px" width="13" height="13" viewBox="0 0 13 13"><g transform="translate(0,2)"><path d="M0.5 0.5 H7 L8.5 2 V10.5 H0.5Z" fill="#dfe9f6" stroke="#3a5f9a" stroke-width="1"/><path d="M2 3 H3 M4 3 H7 M2 5.2 H3 M4 5.2 H7 M2 7.4 H3 M4 7.4 H7" stroke="#3a5f9a" stroke-width="0.9"/></g><circle cx="8.6" cy="3.8" r="3.7" fill="#d87070"/><circle cx="7.6" cy="2.8" r="1.4" fill="#eea8a8"/><path d="M7.4 7 H9.8 V9.4 H7.4Z" fill="#5a7ac0"/></svg>
<div class="t" style="left:884.80px;top:388.19px;font-size:9.6px;color:#111;letter-spacing:-0.587px;">OnMakeParameters</div>
<div class="a" style="left:860px;top:406px;width:8.600000000000023px;height:1px;background:repeating-linear-gradient(90deg,#9c9c9c 0 1px,transparent 1px 2px)"></div>
<svg style="left:868.6px;top:399.84000000000003px" width="13" height="13" viewBox="0 0 13 13"><g transform="translate(0,2)"><path d="M0.5 0.5 H7 L8.5 2 V10.5 H0.5Z" fill="#dfe9f6" stroke="#3a5f9a" stroke-width="1"/><path d="M2 3 H3 M4 3 H7 M2 5.2 H3 M4 5.2 H7 M2 7.4 H3 M4 7.4 H7" stroke="#3a5f9a" stroke-width="0.9"/></g><circle cx="8.6" cy="3.8" r="3.7" fill="#d87070"/><circle cx="7.6" cy="2.8" r="1.4" fill="#eea8a8"/><path d="M7.4 7 H9.8 V9.4 H7.4Z" fill="#5a7ac0"/></svg>
<div class="t" style="left:884.80px;top:401.21px;font-size:9.6px;color:#111;letter-spacing:-0.642px;">OnChangeParameters</div>
<div class="a" style="left:860px;top:419px;width:8.600000000000023px;height:1px;background:repeating-linear-gradient(90deg,#9c9c9c 0 1px,transparent 1px 2px)"></div>
<svg style="left:868.6px;top:412.86px" width="13" height="13" viewBox="0 0 13 13"><g transform="translate(0,2)"><path d="M0.5 0.5 H7 L8.5 2 V10.5 H0.5Z" fill="#dfe9f6" stroke="#3a5f9a" stroke-width="1"/><path d="M2 3 H3 M4 3 H7 M2 5.2 H3 M4 5.2 H7 M2 7.4 H3 M4 7.4 H7" stroke="#3a5f9a" stroke-width="0.9"/></g><circle cx="8.6" cy="3.8" r="3.7" fill="#e6e6e6" stroke="#b8b8b8" stroke-width="0.5"/><circle cx="7.6" cy="2.8" r="1.4" fill="#ffffff"/><path d="M7.4 7 H9.8 V9.4 H7.4Z" fill="#5a7ac0"/></svg>
<div class="t" style="left:884.80px;top:414.23px;font-size:9.6px;color:#111;letter-spacing:-0.449px;">OnInitSelect</div>
<div class="a" style="left:860px;top:432px;width:8.600000000000023px;height:1px;background:repeating-linear-gradient(90deg,#9c9c9c 0 1px,transparent 1px 2px)"></div>
<svg style="left:868.6px;top:425.88px" width="13" height="13" viewBox="0 0 13 13"><g transform="translate(0,2)"><path d="M0.5 0.5 H7 L8.5 2 V10.5 H0.5Z" fill="#dfe9f6" stroke="#3a5f9a" stroke-width="1"/><path d="M2 3 H3 M4 3 H7 M2 5.2 H3 M4 5.2 H7 M2 7.4 H3 M4 7.4 H7" stroke="#3a5f9a" stroke-width="0.9"/></g><circle cx="8.6" cy="3.8" r="3.7" fill="#d87070"/><circle cx="7.6" cy="2.8" r="1.4" fill="#eea8a8"/><path d="M7.4 7 H9.8 V9.4 H7.4Z" fill="#5a7ac0"/></svg>
<div class="t" style="left:884.80px;top:427.25px;font-size:9.6px;color:#111;letter-spacing:-0.605px;">OnSelectParam</div>
<div class="a" style="left:860px;top:445px;width:8.600000000000023px;height:1px;background:repeating-linear-gradient(90deg,#9c9c9c 0 1px,transparent 1px 2px)"></div>
<svg style="left:868.6px;top:438.9px" width="13" height="13" viewBox="0 0 13 13"><g transform="translate(0,2)"><path d="M0.5 0.5 H7 L8.5 2 V10.5 H0.5Z" fill="#dfe9f6" stroke="#3a5f9a" stroke-width="1"/><path d="M2 3 H3 M4 3 H7 M2 5.2 H3 M4 5.2 H7 M2 7.4 H3 M4 7.4 H7" stroke="#3a5f9a" stroke-width="0.9"/></g><circle cx="8.6" cy="3.8" r="3.7" fill="#d87070"/><circle cx="7.6" cy="2.8" r="1.4" fill="#eea8a8"/><path d="M7.4 7 H9.8 V9.4 H7.4Z" fill="#5a7ac0"/></svg>
<div class="t" style="left:885.40px;top:440.27px;font-size:9.6px;color:#111;letter-spacing:-0.549px;">BeforeConnect</div>
<div class="a" style="left:860px;top:458px;width:8.600000000000023px;height:1px;background:repeating-linear-gradient(90deg,#9c9c9c 0 1px,transparent 1px 2px)"></div>
<svg style="left:868.6px;top:451.91999999999996px" width="13" height="13" viewBox="0 0 13 13"><g transform="translate(0,2)"><path d="M0.5 0.5 H7 L8.5 2 V10.5 H0.5Z" fill="#dfe9f6" stroke="#3a5f9a" stroke-width="1"/><path d="M2 3 H3 M4 3 H7 M2 5.2 H3 M4 5.2 H7 M2 7.4 H3 M4 7.4 H7" stroke="#3a5f9a" stroke-width="0.9"/></g><circle cx="8.6" cy="3.8" r="3.7" fill="#d87070"/><circle cx="7.6" cy="2.8" r="1.4" fill="#eea8a8"/><path d="M7.4 7 H9.8 V9.4 H7.4Z" fill="#5a7ac0"/></svg>
<div class="t" style="left:884.80px;top:453.29px;font-size:9.6px;color:#111;letter-spacing:-0.551px;">OnConnect</div>
<div class="a" style="left:860px;top:471px;width:8.600000000000023px;height:1px;background:repeating-linear-gradient(90deg,#9c9c9c 0 1px,transparent 1px 2px)"></div>
<svg style="left:868.6px;top:464.94px" width="13" height="13" viewBox="0 0 13 13"><g transform="translate(0,2)"><path d="M0.5 0.5 H7 L8.5 2 V10.5 H0.5Z" fill="#dfe9f6" stroke="#3a5f9a" stroke-width="1"/><path d="M2 3 H3 M4 3 H7 M2 5.2 H3 M4 5.2 H7 M2 7.4 H3 M4 7.4 H7" stroke="#3a5f9a" stroke-width="0.9"/></g><circle cx="8.6" cy="3.8" r="3.7" fill="#e6e6e6" stroke="#b8b8b8" stroke-width="0.5"/><circle cx="7.6" cy="2.8" r="1.4" fill="#ffffff"/><path d="M7.4 7 H9.8 V9.4 H7.4Z" fill="#5a7ac0"/></svg>
<div class="t" style="left:884.80px;top:466.31px;font-size:9.6px;color:#111;letter-spacing:-0.521px;">OnAddObject</div>
<div class="a" style="left:860px;top:484px;width:8.600000000000023px;height:1px;background:repeating-linear-gradient(90deg,#9c9c9c 0 1px,transparent 1px 2px)"></div>
<svg style="left:868.6px;top:477.96px" width="13" height="13" viewBox="0 0 13 13"><g transform="translate(0,2)"><path d="M0.5 0.5 H7 L8.5 2 V10.5 H0.5Z" fill="#dfe9f6" stroke="#3a5f9a" stroke-width="1"/><path d="M2 3 H3 M4 3 H7 M2 5.2 H3 M4 5.2 H7 M2 7.4 H3 M4 7.4 H7" stroke="#3a5f9a" stroke-width="0.9"/></g><circle cx="8.6" cy="3.8" r="3.7" fill="#d87070"/><circle cx="7.6" cy="2.8" r="1.4" fill="#eea8a8"/><path d="M7.4 7 H9.8 V9.4 H7.4Z" fill="#5a7ac0"/></svg>
<div class="t" style="left:885.40px;top:479.33px;font-size:9.6px;color:#111;letter-spacing:-0.577px;">SetGripPoint</div>
<div class="a" style="left:860px;top:497px;width:8.600000000000023px;height:1px;background:repeating-linear-gradient(90deg,#9c9c9c 0 1px,transparent 1px 2px)"></div>
<svg style="left:868.6px;top:490.98px" width="13" height="13" viewBox="0 0 13 13"><g transform="translate(0,2)"><path d="M0.5 0.5 H7 L8.5 2 V10.5 H0.5Z" fill="#dfe9f6" stroke="#3a5f9a" stroke-width="1"/><path d="M2 3 H3 M4 3 H7 M2 5.2 H3 M4 5.2 H7 M2 7.4 H3 M4 7.4 H7" stroke="#3a5f9a" stroke-width="0.9"/></g><circle cx="8.6" cy="3.8" r="3.7" fill="#d87070"/><circle cx="7.6" cy="2.8" r="1.4" fill="#eea8a8"/><path d="M7.4 7 H9.8 V9.4 H7.4Z" fill="#5a7ac0"/></svg>
<div class="t" style="left:884.80px;top:492.35px;font-size:9.6px;color:#111;letter-spacing:-0.540px;">OnMoveGripPoint</div>
<div class="a" style="left:860px;top:510px;width:8.600000000000023px;height:1px;background:repeating-linear-gradient(90deg,#9c9c9c 0 1px,transparent 1px 2px)"></div>
<svg style="left:868.6px;top:504.0px" width="13" height="13" viewBox="0 0 13 13"><g transform="translate(0,2)"><path d="M0.5 0.5 H7 L8.5 2 V10.5 H0.5Z" fill="#dfe9f6" stroke="#3a5f9a" stroke-width="1"/><path d="M2 3 H3 M4 3 H7 M2 5.2 H3 M4 5.2 H7 M2 7.4 H3 M4 7.4 H7" stroke="#3a5f9a" stroke-width="0.9"/></g><circle cx="8.6" cy="3.8" r="3.7" fill="#d87070"/><circle cx="7.6" cy="2.8" r="1.4" fill="#eea8a8"/><path d="M7.4 7 H9.8 V9.4 H7.4Z" fill="#5a7ac0"/></svg>
<div class="t" style="left:884.80px;top:505.37px;font-size:9.6px;color:#111;letter-spacing:-0.553px;">OnDialog</div>
<div class="a" style="left:860px;top:523px;width:8.600000000000023px;height:1px;background:repeating-linear-gradient(90deg,#9c9c9c 0 1px,transparent 1px 2px)"></div>
<svg style="left:868.6px;top:517.02px" width="13" height="13" viewBox="0 0 13 13"><g transform="translate(0,2)"><path d="M0.5 0.5 H7 L8.5 2 V10.5 H0.5Z" fill="#dfe9f6" stroke="#3a5f9a" stroke-width="1"/><path d="M2 3 H3 M4 3 H7 M2 5.2 H3 M4 5.2 H7 M2 7.4 H3 M4 7.4 H7" stroke="#3a5f9a" stroke-width="0.9"/></g><circle cx="8.6" cy="3.8" r="3.7" fill="#d87070"/><circle cx="7.6" cy="2.8" r="1.4" fill="#eea8a8"/><path d="M7.4 7 H9.8 V9.4 H7.4Z" fill="#5a7ac0"/></svg>
<div class="t" style="left:884.80px;top:518.39px;font-size:9.6px;color:#111;letter-spacing:-0.559px;">OnDialogChanged</div>
<div class="a" style="left:860px;top:536px;width:8.600000000000023px;height:1px;background:repeating-linear-gradient(90deg,#9c9c9c 0 1px,transparent 1px 2px)"></div>
<svg style="left:868.6px;top:530.04px" width="13" height="13" viewBox="0 0 13 13"><g transform="translate(0,2)"><path d="M0.5 0.5 H7 L8.5 2 V10.5 H0.5Z" fill="#dfe9f6" stroke="#3a5f9a" stroke-width="1"/><path d="M2 3 H3 M4 3 H7 M2 5.2 H3 M4 5.2 H7 M2 7.4 H3 M4 7.4 H7" stroke="#3a5f9a" stroke-width="0.9"/></g><circle cx="8.6" cy="3.8" r="3.7" fill="#e6e6e6" stroke="#b8b8b8" stroke-width="0.5"/><circle cx="7.6" cy="2.8" r="1.4" fill="#ffffff"/><path d="M7.4 7 H9.8 V9.4 H7.4Z" fill="#5a7ac0"/></svg>
<div class="t" style="left:884.80px;top:531.41px;font-size:9.6px;color:#111;letter-spacing:-0.603px;">OnMenu</div>
<div class="a" style="left:860px;top:549px;width:8.600000000000023px;height:1px;background:repeating-linear-gradient(90deg,#9c9c9c 0 1px,transparent 1px 2px)"></div>
<svg style="left:868.6px;top:543.06px" width="13" height="13" viewBox="0 0 13 13"><g transform="translate(0,2)"><path d="M0.5 0.5 H7 L8.5 2 V10.5 H0.5Z" fill="#dfe9f6" stroke="#3a5f9a" stroke-width="1"/><path d="M2 3 H3 M4 3 H7 M2 5.2 H3 M4 5.2 H7 M2 7.4 H3 M4 7.4 H7" stroke="#3a5f9a" stroke-width="0.9"/></g><circle cx="8.6" cy="3.8" r="3.7" fill="#e6e6e6" stroke="#b8b8b8" stroke-width="0.5"/><circle cx="7.6" cy="2.8" r="1.4" fill="#ffffff"/><path d="M7.4 7 H9.8 V9.4 H7.4Z" fill="#5a7ac0"/></svg>
<div class="t" style="left:884.80px;top:544.43px;font-size:9.6px;color:#111;letter-spacing:-0.499px;">OnUpdateGraphics</div>
<div class="a" style="left:844.5px;top:562px;width:9.5px;height:1px;background:repeating-linear-gradient(90deg,#9c9c9c 0 1px,transparent 1px 2px)"></div>
<svg style="left:854px;top:556.08px" width="13" height="13" viewBox="0 0 13 13"><g transform="translate(0,2)"><path d="M0.5 0.5 H7 L8.5 2 V10.5 H0.5Z" fill="#dfe9f6" stroke="#3a5f9a" stroke-width="1"/><path d="M2 3 H3 M4 3 H7 M2 5.2 H3 M4 5.2 H7 M2 7.4 H3 M4 7.4 H7" stroke="#3a5f9a" stroke-width="0.9"/></g><path d="M12.5 0 V5 L8 7.5 V4Z" fill="#4a78c8"/><path d="M4.5 9 L6.5 11.5 L10 7" stroke="#c03030" stroke-width="1.3" fill="none"/></svg>
<div class="t" style="left:870.60px;top:557.37px;font-size:9.7px;color:#111;font-weight:bold;letter-spacing:-0.023px;">Пользовательские функции</div>
<div class="a" style="left:833px;top:575px;width:5px;height:1px;background:repeating-linear-gradient(90deg,#9c9c9c 0 1px,transparent 1px 2px)"></div>
<svg style="left:826px;top:572px" width="7" height="7" viewBox="0 0 7 7"><g shape-rendering="crispEdges"><rect x="0.5" y="0.5" width="6" height="6" fill="#fff" stroke="#9a9a9a" stroke-width="1"/><path d="M2 3.5 H5" stroke="#2a3a5a" stroke-width="1"/></g></svg>
<svg style="left:838px;top:569.1px" width="13" height="12" viewBox="0 0 13 12"><path d="M4 3 L6.5 1 H12 V7.5 L9.5 9.5 H4Z" fill="#3f6fb0"/><path d="M4 3 H9.5 V9.5 H4Z" fill="#6a96d8"/><circle cx="3.2" cy="8.4" r="3" fill="#c04a4a"/><circle cx="2.4" cy="7.6" r="1" fill="#e89090"/></svg>
<div class="t" style="left:855.20px;top:570.39px;font-size:9.7px;color:#111;font-weight:bold;letter-spacing:-0.101px;">Исполнения</div>
<div class="a" style="left:844.5px;top:588px;width:9.5px;height:1px;background:repeating-linear-gradient(90deg,#9c9c9c 0 1px,transparent 1px 2px)"></div>
<svg style="left:854px;top:582.12px" width="13" height="12" viewBox="0 0 13 12"><path d="M4 3 L6.5 1 H12 V7.5 L9.5 9.5 H4Z" fill="#3f6fb0"/><path d="M4 3 H9.5 V9.5 H4Z" fill="#6a96d8"/><circle cx="3.2" cy="8.4" r="3" fill="#c04a4a"/><circle cx="2.4" cy="7.6" r="1" fill="#e89090"/></svg>
<div class="t" style="left:870.60px;top:583.49px;font-size:9.6px;color:#111;letter-spacing:-0.509px;">Исполнение 1 (Implementation 1)</div>
<div class="a" style="left:829px;top:601px;width:9px;height:1px;background:repeating-linear-gradient(90deg,#9c9c9c 0 1px,transparent 1px 2px)"></div>
<svg style="left:838px;top:595.14px" width="13" height="12" viewBox="0 0 13 12"><rect x="0.5" y="0.5" width="12" height="11" fill="#f4f6fa" stroke="#6a7a9a" stroke-width="1"/><rect x="1" y="1" width="11" height="2" fill="#5a78b0"/><path d="M2 5 H11 M2 7 H11 M2 9 H7" stroke="#8a96b0" stroke-width="0.9"/><path d="M2 6 H5" stroke="#c05050" stroke-width="0.9"/></svg>
<div class="t" style="left:855.20px;top:596.43px;font-size:9.7px;color:#111;font-weight:bold;letter-spacing:-0.092px;">Формы</div>
<div class="a" style="left:829px;top:614px;width:9px;height:1px;background:repeating-linear-gradient(90deg,#9c9c9c 0 1px,transparent 1px 2px)"></div>
<svg style="left:838px;top:608.16px" width="13" height="12" viewBox="0 0 13 12"><text x="6.5" y="9" font-size="9.5" fill="#56709e" text-anchor="middle" font-family="Liberation Sans" textLength="12.5" lengthAdjust="spacingAndGlyphs">abc</text><path d="M0.5 11 H12.5" stroke="#6a84b8" stroke-width="1"/></svg>
<div class="t" style="left:855.20px;top:609.45px;font-size:9.7px;color:#111;font-weight:bold;letter-spacing:-0.049px;">Таблица ресурсов</div>
<div class="a" style="left:829px;top:627px;width:9px;height:1px;background:repeating-linear-gradient(90deg,#9c9c9c 0 1px,transparent 1px 2px)"></div>
<svg style="left:838px;top:621.18px" width="12" height="13" viewBox="0 0 12 13"><path d="M2 1.5 Q2 0.5 3 0.5 H10.5 V2.5 H9.5 V9.5 H11 V11.5 H1 V9.5 H2Z" fill="#6f94c8" stroke="#2f5288" stroke-width="1"/><path d="M3.5 3.4 H8 M3.5 5.4 H8 M3.5 7.4 H8" stroke="#e4ecf8" stroke-width="0.9"/></svg>
<div class="a" style="left:853.2px;top:620.9799999999999px;width:37.2px;height:12.6px;background:#0a78d8;"></div>
<div class="t" style="left:855.20px;top:622.47px;font-size:9.7px;color:#fff;font-weight:bold;letter-spacing:-0.293px;">Скрипт</div>
<div class="a" style="left:1059.5px;top:242.3px;width:411px;height:320.7px;background:#f0f0f0;border:1.5px solid #a0a0a0;border-right-color:#fafafa;border-bottom-color:#fafafa"></div>
<div class="a" style="left:1064px;top:246.3px;width:404px;height:311.5px;background:#f0f0f0;border:1.5px solid #6e6e6e;border-right-color:#e4e4e4;border-bottom-color:#e4e4e4"></div>
<div class="a" style="left:1065.5px;top:247.5px;width:386.5px;height:297.8px;background:#ffffff;"></div>
<div class="a" style="left:1457.3px;top:267.2px;width:1.6px;height:16.5px;background:#7a7a7a;"></div>
<div class="a" style="left:1079.5px;top:550.6px;width:137.5px;height:1.5px;background:#7a7a7a;"></div>
<div class="a" style="left:0;top:0;width:1452px;height:545.3px;overflow:hidden"><div class="t" style="left:1070.30px;top:250.96px;font-size:10.3px;color:#1a1ab8;font-family:'Liberation Mono',monospace;letter-spacing:0.269px;">function</div><div class="t" style="left:1121.90px;top:250.96px;font-size:10.3px;color:#1a1a1a;font-family:'Liberation Mono',monospace;"> </div><div class="t" style="left:1128.35px;top:250.96px;font-size:10.3px;color:#a030b0;font-family:'Liberation Mono',monospace;letter-spacing:0.269px;">ActHeader</div><div class="t" style="left:1186.40px;top:250.96px;font-size:10.3px;color:#1a1a1a;font-family:'Liberation Mono',monospace;letter-spacing:0.269px;"> {</div><div class="t" style="left:1091.50px;top:263.99px;font-size:10.3px;color:#2a8a80;font-family:'Liberation Mono',monospace;letter-spacing:0.269px;">NPart</div><div class="t" style="left:1123.75px;top:263.99px;font-size:10.3px;color:#1a1a1a;font-family:'Liberation Mono',monospace;letter-spacing:0.269px;">=1;</div><div class="t" style="left:1091.50px;top:277.02px;font-size:10.3px;color:#22228a;font-family:'Liberation Mono',monospace;letter-spacing:0.269px;">Public</div><div class="t" style="left:1130.20px;top:277.02px;font-size:10.3px;color:#1a1a1a;font-family:'Liberation Mono',monospace;">(</div><div class="t" style="left:1112.80px;top:290.05px;font-size:10.3px;color:#e08848;font-family:'Liberation Mono',monospace;letter-spacing:0.269px;">strURL</div><div class="t" style="left:1151.50px;top:290.05px;font-size:10.3px;color:#1a1a1a;font-family:'Liberation Mono',monospace;letter-spacing:0.269px;">,@SOURCE,</div><div class="t" style="left:1112.80px;top:303.08px;font-size:10.3px;color:#e08848;font-family:'Liberation Mono',monospace;">L</div><div class="t" style="left:1119.25px;top:303.08px;font-size:10.3px;color:#1a1a1a;font-family:'Liberation Mono',monospace;letter-spacing:0.269px;">, @LENGTH,</div><div class="t" style="left:1112.80px;top:316.11px;font-size:10.3px;color:#e08848;font-family:'Liberation Mono',monospace;letter-spacing:0.269px;">massa</div><div class="t" style="left:1145.05px;top:316.11px;font-size:10.3px;color:#1a1a1a;font-family:'Liberation Mono',monospace;letter-spacing:0.269px;">, @MASS,</div><div class="t" style="left:1112.80px;top:329.14px;font-size:10.3px;color:#e08848;font-family:'Liberation Mono',monospace;letter-spacing:0.269px;">masl</div><div class="t" style="left:1138.60px;top:329.14px;font-size:10.3px;color:#1a1a1a;font-family:'Liberation Mono',monospace;letter-spacing:0.269px;">, @RUNNING_METER_MASS,</div><div class="t" style="left:1112.80px;top:342.17px;font-size:10.3px;color:#e08848;font-family:'Liberation Mono',monospace;">h</div><div class="t" style="left:1119.25px;top:342.17px;font-size:10.3px;color:#1a1a1a;font-family:'Liberation Mono',monospace;letter-spacing:0.269px;">, @I_SHAPE_HEIGHT,</div><div class="t" style="left:1112.80px;top:355.20px;font-size:10.3px;color:#e08848;font-family:'Liberation Mono',monospace;">b</div><div class="t" style="left:1119.25px;top:355.20px;font-size:10.3px;color:#1a1a1a;font-family:'Liberation Mono',monospace;letter-spacing:0.269px;">, @FLANGE_WIDTH,</div><div class="t" style="left:1112.80px;top:368.23px;font-size:10.3px;color:#e08848;font-family:'Liberation Mono',monospace;">s</div><div class="t" style="left:1119.25px;top:368.23px;font-size:10.3px;color:#1a1a1a;font-family:'Liberation Mono',monospace;letter-spacing:0.269px;">, @WALL_THICKNESS,</div><div class="t" style="left:1112.80px;top:381.26px;font-size:10.3px;color:#e08848;font-family:'Liberation Mono',monospace;letter-spacing:0.269px;">Mark</div><div class="t" style="left:1138.60px;top:381.26px;font-size:10.3px;color:#1a1a1a;font-family:'Liberation Mono',monospace;letter-spacing:0.269px;">, @MARK,</div><div class="t" style="left:1112.80px;top:394.29px;font-size:10.3px;color:#e08848;font-family:'Liberation Mono',monospace;letter-spacing:0.269px;">Designation</div><div class="t" style="left:1183.75px;top:394.29px;font-size:10.3px;color:#1a1a1a;font-family:'Liberation Mono',monospace;letter-spacing:0.269px;">,@DES,</div><div class="t" style="left:1112.80px;top:407.32px;font-size:10.3px;color:#e08848;font-family:'Liberation Mono',monospace;letter-spacing:0.269px;">strDesignation</div><div class="t" style="left:1203.10px;top:407.32px;font-size:10.3px;color:#1a1a1a;font-family:'Liberation Mono',monospace;letter-spacing:0.269px;">, @STANDART_DESIGNATION,</div><div class="t" style="left:1112.80px;top:420.35px;font-size:10.3px;color:#e08848;font-family:'Liberation Mono',monospace;letter-spacing:0.269px;">rfName</div><div class="t" style="left:1151.50px;top:420.35px;font-size:10.3px;color:#1a1a1a;font-family:'Liberation Mono',monospace;letter-spacing:0.269px;">,@NAME,</div><div class="t" style="left:1112.80px;top:433.38px;font-size:10.3px;color:#e08848;font-family:'Liberation Mono',monospace;letter-spacing:0.269px;">rfPosition</div><div class="t" style="left:1177.30px;top:433.38px;font-size:10.3px;color:#1a1a1a;font-family:'Liberation Mono',monospace;letter-spacing:0.269px;">,@POSITION,</div><div class="t" style="left:1112.80px;top:446.41px;font-size:10.3px;color:#e08848;font-family:'Liberation Mono',monospace;letter-spacing:0.269px;">rfComment</div><div class="t" style="left:1170.85px;top:446.41px;font-size:10.3px;color:#1a1a1a;font-family:'Liberation Mono',monospace;letter-spacing:0.269px;">,@COMMENT,</div><div class="t" style="left:1112.80px;top:459.44px;font-size:10.3px;color:#e08848;font-family:'Liberation Mono',monospace;letter-spacing:0.269px;">rfType</div><div class="t" style="left:1151.50px;top:459.44px;font-size:10.3px;color:#1a1a1a;font-family:'Liberation Mono',monospace;letter-spacing:0.269px;">,@TYPE,</div><div class="t" style="left:1112.80px;top:472.47px;font-size:10.3px;color:#e08848;font-family:'Liberation Mono',monospace;letter-spacing:0.269px;">rfTypeKM</div><div class="t" style="left:1164.40px;top:472.47px;font-size:10.3px;color:#1a1a1a;font-family:'Liberation Mono',monospace;">,</div><div class="t" style="left:1170.85px;top:472.47px;font-size:10.3px;color:#1a1a1a;font-family:'Liberation Mono',monospace;font-weight:bold;letter-spacing:0.269px;">&quot;hidden&quot;</div><div class="t" style="left:1222.45px;top:472.47px;font-size:10.3px;color:#1a1a1a;font-family:'Liberation Mono',monospace;">,</div><div class="t" style="left:1112.80px;top:485.50px;font-size:10.3px;color:#e08848;font-family:'Liberation Mono',monospace;letter-spacing:0.269px;">strMaterial</div><div class="t" style="left:1183.75px;top:485.50px;font-size:10.3px;color:#1a1a1a;font-family:'Liberation Mono',monospace;letter-spacing:0.269px;">,@MATERIAL,</div><div class="t" style="left:1112.80px;top:498.53px;font-size:10.3px;color:#e08848;font-family:'Liberation Mono',monospace;letter-spacing:0.269px;">strStandard</div><div class="t" style="left:1183.75px;top:498.53px;font-size:10.3px;color:#1a1a1a;font-family:'Liberation Mono',monospace;letter-spacing:0.269px;">,@STANDART,</div><div class="t" style="left:1112.80px;top:511.56px;font-size:10.3px;color:#e08848;font-family:'Liberation Mono',monospace;letter-spacing:0.269px;">StandardMaterial</div><div class="t" style="left:1216.00px;top:511.56px;font-size:10.3px;color:#1a1a1a;font-family:'Liberation Mono',monospace;letter-spacing:0.269px;">,@STANDART_MATERIAL,</div><div class="t" style="left:1112.80px;top:524.59px;font-size:10.3px;color:#e08848;font-family:'Liberation Mono',monospace;letter-spacing:0.269px;">seria</div><div class="t" style="left:1145.05px;top:524.59px;font-size:10.3px;color:#1a1a1a;font-family:'Liberation Mono',monospace;letter-spacing:0.269px;">,@SERIES,</div><div class="t" style="left:1112.80px;top:537.62px;font-size:10.3px;color:#e08848;font-family:'Liberation Mono',monospace;letter-spacing:0.269px;">strSection</div><div class="t" style="left:1177.30px;top:537.62px;font-size:10.3px;color:#1a1a1a;font-family:'Liberation Mono',monospace;letter-spacing:0.269px;">,@SECTION,</div></div>
<div class="a" style="left:1059.5px;top:571.5px;width:409.5px;height:142.5px;background:#f0f0f0;border:1.2px solid #fbfbfb"></div>
<div class="a" style="left:1067.5px;top:578.5px;width:396px;height:127.6px;background:#f0f0f0;border:1.5px solid #7a7a7a;border-right-color:#fdfdfd;border-bottom-color:#fdfdfd"></div>
<div class="a" style="left:1069px;top:580px;width:378.6px;height:125px;background:#d0d0d0;"></div>
<svg style="left:1451.5px;top:584.5px" width="8" height="6" viewBox="0 0 8 6"><path d="M4 0.8 L7.4 5.2 H0.6Z" fill="#a6a6a6"/></svg>
<svg style="left:1451.5px;top:695px" width="8" height="6" viewBox="0 0 8 6"><path d="M4 5.2 L7.4 0.8 H0.6Z" fill="#a6a6a6"/></svg>
<div class="a" style="left:1060.5px;top:715.3px;width:59.5px;height:17.8px;background:#fafafa;"></div>
<div class="a" style="left:1120px;top:716px;width:91px;height:17px;background:#ededed;border-left:1px solid #dcdcdc;"></div>
<svg style="left:1066.5px;top:719.5px" width="11" height="10" viewBox="0 0 11 10"><path d="M0.5 5.4 L3 4 H8.5 L10.5 5.4 V8.4 L8 9.8 H0.5Z" fill="#3a68a8"/><path d="M0.5 5.4 H8 V9.8 H0.5Z" fill="#5a88c8"/><path d="M1.5 1.6 L3.6 0.4 H6.4 L7.6 1.6 V4.6 L5.8 5.8 H1.5Z" fill="#a83838"/><path d="M1.5 1.6 H5.8 V5.8 H1.5Z" fill="#d06868"/></svg>
<div class="t" style="left:1082.70px;top:719.93px;font-size:9.3px;color:#1a1a1a;letter-spacing:-0.012px;">Объект</div>
<svg style="left:1125.5px;top:718.5px" width="11" height="11" viewBox="0 0 11 11"><path d="M2 1.5 Q2 0.5 3 0.5 H9.5 V2.5 H8.5 V8.5 H10 V10.5 H1 V8.5 H2Z" fill="#7fa8d8" stroke="#2f5f9e" stroke-width="1"/><path d="M3.5 3.2 H7.2 M3.5 5.2 H7.2 M3.5 7.2 H7.2" stroke="#e8f0fa" stroke-width="0.9"/></svg>
<div class="t" style="left:1141.40px;top:718.93px;font-size:9.3px;color:#1a1a1a;letter-spacing:-0.131px;">Анализ скрипта</div>
<div class="a" style="left:794.5px;top:737.5px;width:684px;height:1px;background:#dadada;"></div>
<div class="t" style="left:796.00px;top:743.50px;font-size:10.4px;color:#1a1a1a;transform:scaleX(0.8180);transform-origin:0 0;">pgsql:nspds230</div>
<div class="a" style="left:1213.5px;top:741px;width:1px;height:13px;background:#dedede;"></div>
<div class="a" style="left:1345.5px;top:741px;width:1px;height:13px;background:#dedede;"></div>
<div class="a" style="left:1422px;top:741px;width:1px;height:13px;background:#dedede;"></div>
<div class="a" style="left:1445px;top:741px;width:1px;height:13px;background:#dedede;"></div>
<div class="t" style="left:1217.00px;top:743.50px;font-size:10.4px;color:#1a1a1a;transform:scaleX(0.8341);transform-origin:0 0;">12:52:06  10.10.2022  (Скрипт)</div>
<div class="t" style="left:1349.20px;top:743.50px;font-size:10.4px;color:#1a1a1a;transform:scaleX(0.8297);transform-origin:0 0;">Стр 0 Стл 0</div>
<div class="t" style="left:1426.70px;top:743.50px;font-size:10.4px;color:#1a1a1a;transform:scaleX(0.7857);transform-origin:0 0;">ВСТ</div>
<svg style="left:1468px;top:746px" width="9" height="9" viewBox="0 0 9 9"><path d="M7 1 V2 M7 4 V5 M4 4 V5 M7 7 V8 M4 7 V8 M1 7 V8" stroke="#b4b4b4" stroke-width="1.4"/></svg>
<!-- bottom -->
<div class="a" style="left:0px;top:794px;width:1558px;height:4px;background:#4e4e4e;"></div>
<div class="a" style="left:0px;top:797.5px;width:1558px;height:60px;background:#5b5b5b;"></div>
<div class="a" style="left:1px;top:799.5px;width:14.8px;height:56px;background:#767676;"></div>
<svg style="left:4.5px;top:804px" width="7" height="7" viewBox="0 0 7 7"><path d="M0.5 0.5 L6.5 6.5 M6.5 0.5 L0.5 6.5" stroke="#f4f4f4" stroke-width="1.2"/></svg>
<svg style="left:4.5px;top:819px" width="7" height="7" viewBox="0 0 7 7"><path d="M0.3 1.6 H4.2 V5.4 H0.3 M4.2 0.3 V6.7 M4.2 3.5 H7" stroke="#f0f0f0" stroke-width="1" fill="none"/></svg>
<div class="t" style="left:3.5px;top:854.5px;font-size:9.2px;color:#e4e4e4;transform:rotate(-90deg);transform-origin:0 0;width:25px;overflow:hidden;letter-spacing:-0.2px">Команд</div>
<div class="a" style="left:15px;top:800.3px;width:400px;height:6px;overflow:hidden"><div class="t" style="left:3.00px;top:-2.72px;font-size:9.4px;color:#e2e2e2;font-family:'Liberation Mono',monospace;letter-spacing:-0.016px;">*Отмена*</div></div>
<div class="t" style="left:18.00px;top:808.68px;font-size:9.4px;color:#e2e2e2;font-family:'Liberation Mono',monospace;letter-spacing:0.009px;">Команда: spsmauto</div>
<div class="t" style="left:18.00px;top:819.68px;font-size:9.4px;color:#e2e2e2;font-family:'Liberation Mono',monospace;letter-spacing:0.009px;">spsmauto - Мастер объектов</div>
<div class="t" style="left:18.00px;top:830.68px;font-size:9.4px;color:#e2e2e2;font-family:'Liberation Mono',monospace;letter-spacing:0.009px;">enter uid: 4841A322E6EE95F0</div>
<div class="a" style="left:15px;top:843.5px;width:1542px;height:1px;background:#6e6e6e;"></div>
<div class="t" style="left:18.00px;top:845.08px;font-size:9.4px;color:#e2e2e2;font-family:'Liberation Mono',monospace;letter-spacing:0.009px;">Команда:</div>
<div class="a" style="left:0px;top:856.3px;width:1558px;height:18.7px;background:#474747;"></div>
<div class="t" style="left:4.00px;top:860.83px;font-size:9.3px;color:#e8e8e8;letter-spacing:-0.263px;">6224.8351,6167.2211,0.0000</div>
<div class="a" style="left:125.5px;top:860px;width:1px;height:13px;background:#5e5e5e;"></div>
<div class="t" style="left:134.50px;top:860.83px;font-size:9.3px;color:#e8e8e8;letter-spacing:-0.421px;">ШАГ</div>
<div class="a" style="left:159px;top:860px;width:1px;height:13px;background:#666;"></div>
<div class="t" style="left:167.50px;top:860.83px;font-size:9.3px;color:#e8e8e8;letter-spacing:-0.944px;">СЕТКА</div>
<div class="a" style="left:200.5px;top:857.4px;width:64.19999999999999px;height:16.4px;background:#526381;border:1px solid #6a8ac0"></div>
<div class="t" style="left:209.00px;top:860.83px;font-size:9.3px;color:#f4f4f4;letter-spacing:-0.732px;">оПРИВЯЗКА</div>
<div class="a" style="left:264.7px;top:857.4px;width:78.0px;height:16.4px;background:#526381;border:1px solid #6a8ac0"></div>
<div class="t" style="left:272.50px;top:860.83px;font-size:9.3px;color:#f4f4f4;letter-spacing:-0.547px;">3D оПРИВЯЗКА</div>
<div class="a" style="left:342.7px;top:857.4px;width:69.0px;height:16.4px;background:#526381;border:1px solid #6a8ac0"></div>
<div class="t" style="left:350.00px;top:860.83px;font-size:9.3px;color:#f4f4f4;letter-spacing:-0.692px;">ОТС-ОБЪЕКТ</div>
<div class="a" style="left:411.7px;top:857.4px;width:66.0px;height:16.4px;background:#526381;border:1px solid #6a8ac0"></div>
<div class="t" style="left:419.00px;top:860.83px;font-size:9.3px;color:#f4f4f4;letter-spacing:-0.452px;">ОТС-ПОЛЯР</div>
<div class="a" style="left:515.5px;top:857.4px;width:62.200000000000045px;height:16.4px;background:#526381;border:1px solid #6a8ac0"></div>
<div class="t" style="left:523.50px;top:860.83px;font-size:9.3px;color:#f4f4f4;letter-spacing:-0.215px;">ДИН-ВВОД</div>
<div class="a" style="left:613.5px;top:857.4px;width:30.700000000000045px;height:16.4px;background:#526381;border:1px solid #6a8ac0"></div>
<div class="t" style="left:621.00px;top:860.83px;font-size:9.3px;color:#f4f4f4;letter-spacing:-1.374px;">ВЕС</div>
<div class="a" style="left:644.2px;top:857.4px;width:66.0px;height:16.4px;background:#526381;border:1px solid #6a8ac0"></div>
<div class="t" style="left:651.50px;top:860.83px;font-size:9.3px;color:#f4f4f4;letter-spacing:-0.671px;">ШТРИХОВКА</div>
<div class="t" style="left:485.00px;top:860.83px;font-size:9.3px;color:#e8e8e8;letter-spacing:-0.504px;">ОРТО</div>
<div class="t" style="left:585.00px;top:860.83px;font-size:9.3px;color:#e8e8e8;letter-spacing:-0.644px;">ИЗО</div>
<div class="t" style="left:1049.00px;top:860.83px;font-size:9.3px;color:#e8e8e8;letter-spacing:-0.247px;">МОДЕЛЬ</div>
<svg style="left:1091px;top:860px" width="12" height="12" viewBox="0 0 12 12"><circle cx="3" cy="8.6" r="2" fill="none" stroke="#dcdcdc"/><circle cx="8.4" cy="4" r="2" fill="none" stroke="#dcdcdc"/><path d="M5 7 L6.6 5.6 M2 4.5 H5 M7 9 H11" stroke="#dcdcdc" stroke-width="0.9"/></svg>
<div class="a" style="left:1105.5px;top:860px;width:1px;height:13px;background:#666;"></div>
<svg style="left:1107.5px;top:860px" width="12" height="13" viewBox="0 0 12 13"><rect x="0.5" y="0.5" width="10.5" height="8" fill="#e4e4e4"/><rect x="0.5" y="0.5" width="10.5" height="2" fill="#bdbdbd"/><path d="M3 9.5 H8.6 L5.8 12.4Z" fill="#f0f0f0"/></svg>
<div class="a" style="left:1197.5px;top:860px;width:1px;height:13px;background:#666;"></div>
<svg style="left:1199.5px;top:859.5px" width="14" height="14" viewBox="0 0 14 14"><circle cx="4" cy="4" r="3" fill="#f8e8a0"/><rect x="2.8" y="6.6" width="2.4" height="2" fill="#bdbdbd"/><rect x="8" y="1" width="5" height="11" fill="none" stroke="#cfcfcf" stroke-width="0.8"/><path d="M7 6.5 V13 L8.6 11.6 L9.8 14 L11 13.4 L9.8 11 H11.8Z" fill="#f4f4f4"/></svg>
<svg style="left:1217.5px;top:859.5px" width="9" height="14" viewBox="0 0 9 14"><circle cx="4.5" cy="4.5" r="3.8" fill="#cfcfcf"/><rect x="2.8" y="8" width="3.4" height="3.6" fill="#a8a8a8"/></svg>
<div class="a" style="left:1232.5px;top:857.4px;width:24.5px;height:16.4px;background:#526381;border:1px solid #6a8ac0"></div>
<div class="a" style="left:1257px;top:857.4px;width:23.5px;height:16.4px;background:#526381;border:1px solid #6a8ac0"></div>
<svg style="left:1240px;top:861px" width="11" height="11" viewBox="0 0 11 11"><circle cx="5.5" cy="5.5" r="4.6" fill="none" stroke="#d04040" stroke-width="1.3"/><path d="M4.5 2.6 V8 L5.8 7 L6.8 9 L7.8 8.5 L6.8 6.6 H8.4Z" fill="#f4d0d0"/></svg>
<svg style="left:1262.5px;top:860px" width="14" height="13" viewBox="0 0 14 13"><path d="M1 0.5 V9.5 L3.2 7.6 L4.8 11 L6.4 10.2 L4.8 7 H7.6Z" fill="#f4f4f4"/><rect x="7" y="6.5" width="6" height="5.5" fill="#e8e8e8" stroke="#f4f4f4" stroke-width="0.6"/><path d="M8 8.5 H12 M8 10.3 H12" stroke="#555" stroke-width="0.7"/></svg>
<svg style="left:1287px;top:859.5px" width="16" height="14" viewBox="0 0 16 14"><path d="M2 1 V12 H14" stroke="#dcdcdc" stroke-width="1" fill="none"/><path d="M0.5 3 L2 0.5 L3.5 3 M12 10.5 L14.5 12 L12 13.5" stroke="#dcdcdc" fill="none" stroke-width="0.9"/><path d="M9.5 1 L6.5 6.5 H8.5 L7.5 10.5 L11 5 H9Z" fill="#e8e8e8"/></svg>
<div class="a" style="left:1303.5px;top:860px;width:1px;height:13px;background:#666;"></div>
<div class="t" style="left:1328.00px;top:861.08px;font-size:9px;color:#e8e8e8;font-weight:bold;letter-spacing:-0.323px;">m1:25</div>
<div class="a" style="left:1375.5px;top:860px;width:1px;height:13px;background:#666;"></div>
<svg style="left:1383px;top:859.5px" width="13" height="14" viewBox="0 0 13 14"><path d="M3 13 L1 8 Q0.5 6.5 2 6.8 L3.2 8 V2.6 Q3.2 1.6 4.1 1.6 Q5 1.6 5 2.6 V1.4 Q5 0.5 6 0.5 Q7 0.5 7 1.4 V2 Q7 1.2 8 1.2 Q9 1.2 9 2.2 V3.4 Q9 2.6 9.9 2.6 Q10.8 2.6 10.8 3.6 V9 Q10.8 11.5 9.5 13Z" fill="#f4f4f4"/></svg>
<div class="a" style="left:1399.5px;top:860px;width:1px;height:13px;background:#666;"></div>
<svg style="left:1407px;top:860px" width="13" height="13" viewBox="0 0 13 13"><circle cx="5.2" cy="5.2" r="4.2" fill="#cfe6f8" stroke="#e8e8e8" stroke-width="1"/><path d="M8.4 8.4 L12 12" stroke="#e8c890" stroke-width="2"/></svg>
<div class="a" style="left:1429.5px;top:859px;width:15.5px;height:15px;background:#4f8fdc;border:1px solid #9cc0f0"></div>
<svg style="left:1432px;top:861px" width="11" height="11" viewBox="0 0 11 11"><circle cx="4.6" cy="4.6" r="3.4" fill="none" stroke="#f4f4f4" stroke-width="1.2"/><path d="M7 7 L10.4 10.4" stroke="#f4f4f4" stroke-width="1.6"/></svg>
<svg style="left:1454px;top:860px" width="14" height="13" viewBox="0 0 14 13"><rect x="0.5" y="0.5" width="10" height="8.5" fill="none" stroke="#dcdcdc" stroke-width="1"/><rect x="0.5" y="0.5" width="10" height="1.6" fill="#dcdcdc"/><circle cx="8.6" cy="8" r="2.8" fill="#4a4a4a" stroke="#dcdcdc"/><path d="M10.6 10 L13 12.4" stroke="#dcdcdc" stroke-width="1.3"/></svg>
<svg style="left:1476px;top:860px" width="15" height="14" viewBox="0 0 15 14"><ellipse cx="7.5" cy="8" rx="6.8" ry="3.2" fill="none" stroke="#cfcfcf" stroke-width="0.9"/><path d="M7.5 0.5 V13.5" stroke="#e8e8e8" stroke-width="1.6"/><path d="M11 11.5 L13.4 10 L12.6 12.8Z" fill="#cfcfcf"/></svg>
<div class="a" style="left:1493.5px;top:860px;width:1px;height:13px;background:#666;"></div>
<svg style="left:1500px;top:860.5px" width="14" height="13" viewBox="0 0 14 13"><path d="M2 6.5 A5 5 0 0 1 11 4" fill="none" stroke="#a8e070" stroke-width="1.8"/><path d="M12 6.5 A5 5 0 0 1 3 9" fill="none" stroke="#a8e070" stroke-width="1.8"/><path d="M9.2 4.6 L12.6 5.4 L12.4 1.8Z M4.8 8.4 L1.4 7.6 L1.6 11.2Z" fill="#a8e070"/></svg>
<div class="a" style="left:1516.5px;top:860px;width:1px;height:13px;background:#666;"></div>
<svg style="left:1518.5px;top:859.5px" width="14" height="14" viewBox="0 0 14 14"><path d="M0.5 8 V0.5 H9.5 V4" stroke="#dcdcdc" fill="none"/><rect x="0.5" y="0.5" width="9" height="1.6" fill="#dcdcdc"/><rect x="5.5" y="7" width="7.5" height="5.5" fill="#e8e8e8"/><path d="M7 7 V5.4 Q7 3.8 9.2 3.8 Q11.4 3.8 11.4 5.4 V7" fill="none" stroke="#dcdcdc" stroke-width="1"/><rect x="8.5" y="9" width="1.6" height="1.6" fill="#555"/></svg>
<div class="a" style="left:1535px;top:860px;width:1px;height:13px;background:#666;"></div>
<svg style="left:1541.5px;top:859.5px" width="15" height="14" viewBox="0 0 15 14"><rect x="3" y="3" width="9" height="7.6" fill="#189ad8" stroke="#cfe8f8" stroke-width="1.2"/><path d="M0.5 3 V0.8 H3 M12 0.8 H14.5 V3 M14.5 10.6 V13 H12 M3 13 H0.5 V10.6" stroke="#dcdcdc" fill="none" stroke-width="1"/></svg>
</body></html>
